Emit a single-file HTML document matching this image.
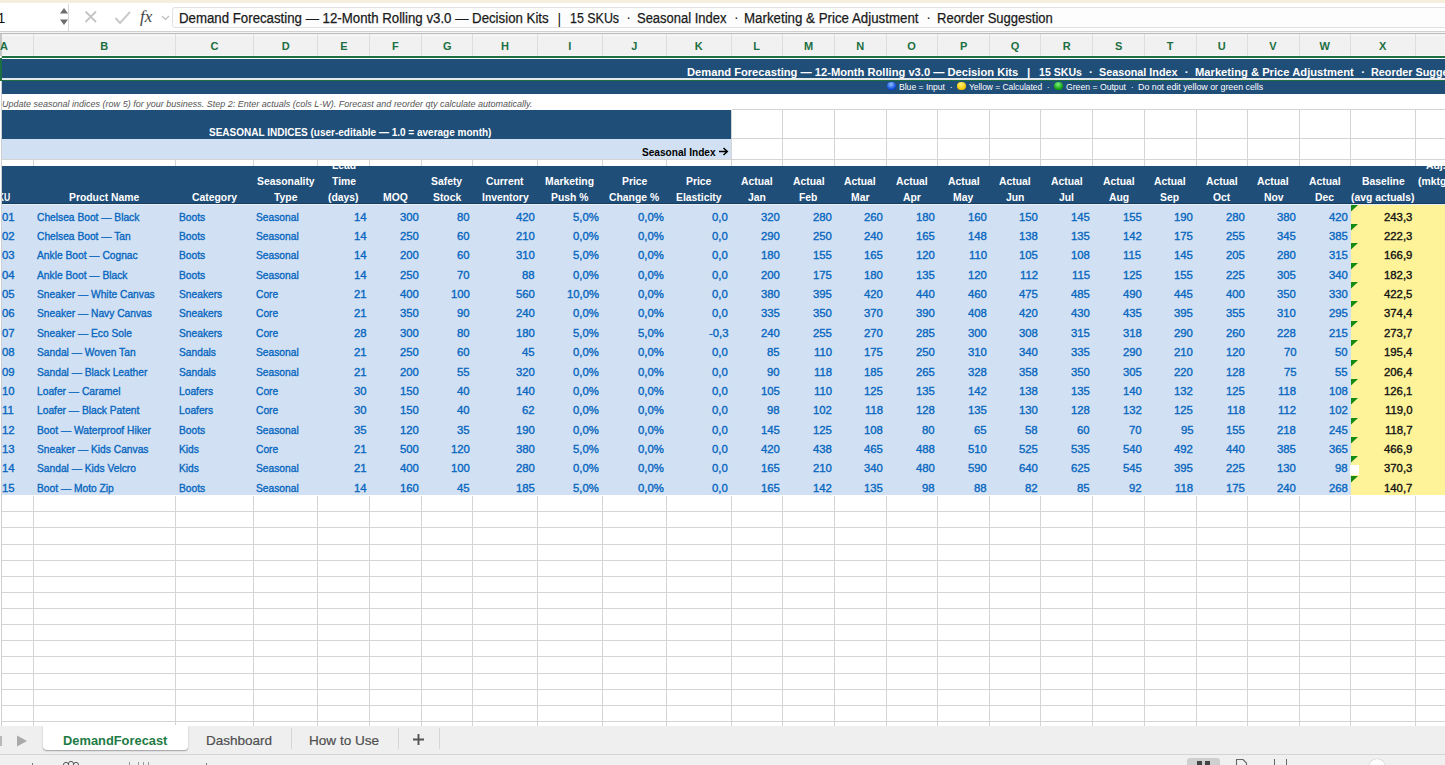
<!DOCTYPE html><html><head><meta charset="utf-8"><style>
html,body{margin:0;padding:0;}
body{width:1445px;height:765px;overflow:hidden;position:relative;background:#fff;font-family:"Liberation Sans",sans-serif;}
div{box-sizing:border-box;}
.t{position:absolute;white-space:nowrap;transform-origin:0 0;}
</style></head><body>
<div style="position:absolute;left:0.00px;top:0.00px;width:1445.00px;height:2.50px;background:#F6EEDC;"></div>
<div style="position:absolute;left:0.00px;top:2.50px;width:1445.00px;height:0.70px;background:#E4DCC8;"></div>
<div style="position:absolute;left:0.00px;top:3.20px;width:1445.00px;height:27.80px;background:#FFFFFF;"></div>
<div style="position:absolute;left:67.50px;top:3.50px;width:1.00px;height:27.00px;background:#D8D8D8;"></div>
<svg style="position:absolute;left:59px;top:6px" width="10" height="22"><path d="M1 7.5 L5 2 L9 7.5Z M1 13.5 L5 19 L9 13.5Z" fill="#6d6d6d"/></svg>
<svg style="position:absolute;left:84px;top:10px" width="14" height="14"><path d="M1.5 1.5 L12 12 M12 1.5 L1.5 12" stroke="#c4c4c4" stroke-width="1.8"/></svg>
<svg style="position:absolute;left:114px;top:10px" width="18" height="16"><path d="M1.5 8 L6 13 L16 2" stroke="#c9c9c9" stroke-width="1.9" fill="none"/></svg>
<svg style="position:absolute;left:161px;top:15px" width="9" height="6"><path d="M1 1 L4.5 4.5 L8 1" stroke="#bbb" stroke-width="1.1" fill="none"/></svg>
<div style="position:absolute;left:172.00px;top:7.20px;width:1288.00px;height:21.00px;background:#FDFDFD;border:1px solid #E2E2E2;border-radius:3px;"></div>
<div style="position:absolute;left:0.00px;top:30.80px;width:1445.00px;height:1.00px;background:#D0D0D0;"></div>
<div style="position:absolute;left:0.00px;top:31.80px;width:1445.00px;height:0.80px;background:#F4F4F4;"></div>
<div style="position:absolute;left:0.00px;top:32.60px;width:1445.00px;height:1.60px;background:#BDBDBD;"></div>
<div style="position:absolute;left:0.00px;top:34.20px;width:1445.00px;height:21.80px;background:#F1F1F1;"></div>
<div style="position:absolute;left:0.00px;top:35.00px;width:1445.00px;height:1.00px;background:#F8F8F8;"></div>
<div style="position:absolute;left:0.00px;top:54.60px;width:1445.00px;height:1.20px;background:#F8F8F8;"></div>
<div style="position:absolute;left:1.00px;top:34.20px;width:1.00px;height:21.80px;background:#DEDEDE;"></div>
<div style="position:absolute;left:32.60px;top:34.20px;width:1.00px;height:21.80px;background:#DEDEDE;"></div>
<div style="position:absolute;left:175.10px;top:34.20px;width:1.00px;height:21.80px;background:#DEDEDE;"></div>
<div style="position:absolute;left:252.90px;top:34.20px;width:1.00px;height:21.80px;background:#DEDEDE;"></div>
<div style="position:absolute;left:317.40px;top:34.20px;width:1.00px;height:21.80px;background:#DEDEDE;"></div>
<div style="position:absolute;left:368.90px;top:34.20px;width:1.00px;height:21.80px;background:#DEDEDE;"></div>
<div style="position:absolute;left:421.00px;top:34.20px;width:1.00px;height:21.80px;background:#DEDEDE;"></div>
<div style="position:absolute;left:472.10px;top:34.20px;width:1.00px;height:21.80px;background:#DEDEDE;"></div>
<div style="position:absolute;left:536.80px;top:34.20px;width:1.00px;height:21.80px;background:#DEDEDE;"></div>
<div style="position:absolute;left:601.60px;top:34.20px;width:1.00px;height:21.80px;background:#DEDEDE;"></div>
<div style="position:absolute;left:666.10px;top:34.20px;width:1.00px;height:21.80px;background:#DEDEDE;"></div>
<div style="position:absolute;left:730.60px;top:34.20px;width:1.00px;height:21.80px;background:#DEDEDE;"></div>
<div style="position:absolute;left:782.00px;top:34.20px;width:1.00px;height:21.80px;background:#DEDEDE;"></div>
<div style="position:absolute;left:834.00px;top:34.20px;width:1.00px;height:21.80px;background:#DEDEDE;"></div>
<div style="position:absolute;left:885.60px;top:34.20px;width:1.00px;height:21.80px;background:#DEDEDE;"></div>
<div style="position:absolute;left:936.90px;top:34.20px;width:1.00px;height:21.80px;background:#DEDEDE;"></div>
<div style="position:absolute;left:989.00px;top:34.20px;width:1.00px;height:21.80px;background:#DEDEDE;"></div>
<div style="position:absolute;left:1040.30px;top:34.20px;width:1.00px;height:21.80px;background:#DEDEDE;"></div>
<div style="position:absolute;left:1092.30px;top:34.20px;width:1.00px;height:21.80px;background:#DEDEDE;"></div>
<div style="position:absolute;left:1143.90px;top:34.20px;width:1.00px;height:21.80px;background:#DEDEDE;"></div>
<div style="position:absolute;left:1195.50px;top:34.20px;width:1.00px;height:21.80px;background:#DEDEDE;"></div>
<div style="position:absolute;left:1247.10px;top:34.20px;width:1.00px;height:21.80px;background:#DEDEDE;"></div>
<div style="position:absolute;left:1298.60px;top:34.20px;width:1.00px;height:21.80px;background:#DEDEDE;"></div>
<div style="position:absolute;left:1350.20px;top:34.20px;width:1.00px;height:21.80px;background:#DEDEDE;"></div>
<div style="position:absolute;left:1414.90px;top:34.20px;width:1.00px;height:21.80px;background:#DEDEDE;"></div>
<div style="position:absolute;left:0.00px;top:34.20px;width:1.60px;height:21.80px;background:#C8C8C8;"></div>
<div style="position:absolute;left:0.00px;top:56.00px;width:1445.00px;height:670.00px;background:#FFFFFF;"></div>
<div style="position:absolute;left:1.00px;top:56.00px;width:1.00px;height:670.00px;background:#D0D0D0;"></div>
<div style="position:absolute;left:2.00px;top:56.00px;width:1443.00px;height:1.70px;background:#1D6F42;"></div>
<div style="position:absolute;left:0.00px;top:57.70px;width:1.70px;height:23.30px;background:#1D6F42;"></div>
<div style="position:absolute;left:2.00px;top:59.20px;width:1443.00px;height:18.40px;background:#1F4E79;"></div>
<div style="position:absolute;left:2.00px;top:77.80px;width:1443.00px;height:1.90px;background:#E6E9EC;"></div>
<div style="position:absolute;left:2.00px;top:79.70px;width:1443.00px;height:1.70px;background:#1D6F42;"></div>
<div style="position:absolute;left:2.00px;top:81.40px;width:1443.00px;height:12.70px;background:#1F4E79;"></div>
<div style="position:absolute;left:2.00px;top:109.90px;width:729.60px;height:28.80px;background:#1F4E79;"></div>
<div style="position:absolute;left:2.00px;top:138.70px;width:729.60px;height:20.90px;background:#D1E1F3;"></div>
<div style="position:absolute;left:730.60px;top:109.90px;width:1.00px;height:56.00px;background:#D4D4D4;"></div>
<div style="position:absolute;left:782.00px;top:109.90px;width:1.00px;height:56.00px;background:#D4D4D4;"></div>
<div style="position:absolute;left:834.00px;top:109.90px;width:1.00px;height:56.00px;background:#D4D4D4;"></div>
<div style="position:absolute;left:885.60px;top:109.90px;width:1.00px;height:56.00px;background:#D4D4D4;"></div>
<div style="position:absolute;left:936.90px;top:109.90px;width:1.00px;height:56.00px;background:#D4D4D4;"></div>
<div style="position:absolute;left:989.00px;top:109.90px;width:1.00px;height:56.00px;background:#D4D4D4;"></div>
<div style="position:absolute;left:1040.30px;top:109.90px;width:1.00px;height:56.00px;background:#D4D4D4;"></div>
<div style="position:absolute;left:1092.30px;top:109.90px;width:1.00px;height:56.00px;background:#D4D4D4;"></div>
<div style="position:absolute;left:1143.90px;top:109.90px;width:1.00px;height:56.00px;background:#D4D4D4;"></div>
<div style="position:absolute;left:1195.50px;top:109.90px;width:1.00px;height:56.00px;background:#D4D4D4;"></div>
<div style="position:absolute;left:1247.10px;top:109.90px;width:1.00px;height:56.00px;background:#D4D4D4;"></div>
<div style="position:absolute;left:1298.60px;top:109.90px;width:1.00px;height:56.00px;background:#D4D4D4;"></div>
<div style="position:absolute;left:1350.20px;top:109.90px;width:1.00px;height:56.00px;background:#D4D4D4;"></div>
<div style="position:absolute;left:1414.90px;top:109.90px;width:1.00px;height:56.00px;background:#D4D4D4;"></div>
<div style="position:absolute;left:731.60px;top:109.40px;width:713.40px;height:1.00px;background:#D4D4D4;"></div>
<div style="position:absolute;left:731.60px;top:138.20px;width:713.40px;height:1.00px;background:#D4D4D4;"></div>
<div style="position:absolute;left:731.60px;top:159.10px;width:713.40px;height:1.00px;background:#D4D4D4;"></div>
<div style="position:absolute;left:32.60px;top:159.60px;width:1.00px;height:6.30px;background:#D4D4D4;"></div>
<div style="position:absolute;left:175.10px;top:159.60px;width:1.00px;height:6.30px;background:#D4D4D4;"></div>
<div style="position:absolute;left:252.90px;top:159.60px;width:1.00px;height:6.30px;background:#D4D4D4;"></div>
<div style="position:absolute;left:317.40px;top:159.60px;width:1.00px;height:6.30px;background:#D4D4D4;"></div>
<div style="position:absolute;left:368.90px;top:159.60px;width:1.00px;height:6.30px;background:#D4D4D4;"></div>
<div style="position:absolute;left:421.00px;top:159.60px;width:1.00px;height:6.30px;background:#D4D4D4;"></div>
<div style="position:absolute;left:472.10px;top:159.60px;width:1.00px;height:6.30px;background:#D4D4D4;"></div>
<div style="position:absolute;left:536.80px;top:159.60px;width:1.00px;height:6.30px;background:#D4D4D4;"></div>
<div style="position:absolute;left:601.60px;top:159.60px;width:1.00px;height:6.30px;background:#D4D4D4;"></div>
<div style="position:absolute;left:666.10px;top:159.60px;width:1.00px;height:6.30px;background:#D4D4D4;"></div>
<div style="position:absolute;left:730.60px;top:159.60px;width:1.00px;height:6.30px;background:#D4D4D4;"></div>
<div style="position:absolute;left:2.00px;top:159.40px;width:729.60px;height:0.80px;background:#D4D4D4;"></div>
<svg style="position:absolute;left:718px;top:147px" width="11" height="10"><path d="M1 4.5 H9 M5.5 1 L9.3 4.5 L5.5 8" stroke="#000" stroke-width="1.5" fill="none"/></svg>
<div style="position:absolute;left:886.80px;top:81.7px;width:9.2px;height:8.8px;border-radius:50%;background:radial-gradient(circle at 45% 30%,#8fc0ff,#0a45d8 70%);"></div>
<div style="position:absolute;left:956.60px;top:81.7px;width:9.2px;height:8.8px;border-radius:50%;background:radial-gradient(circle at 45% 30%,#fff27a,#f5c400 70%);"></div>
<div style="position:absolute;left:1053.90px;top:81.7px;width:9.2px;height:8.8px;border-radius:50%;background:radial-gradient(circle at 45% 30%,#7ef07e,#0a9a0a 70%);"></div>
<div style="position:absolute;left:2.00px;top:165.90px;width:1443.00px;height:37.90px;background:#1F4E79;"></div>
<div style="position:absolute;left:2.00px;top:203.00px;width:1443.00px;height:0.80px;background:#173d60;"></div>
<div class="t" style="left:-2.50px;top:9.50px;line-height:16px;font:normal normal 14px 'Liberation Sans';color:#111;transform:scaleX(1.0000);">1</div>
<div class="t" style="left:140.00px;top:7.00px;line-height:19px;font:italic normal 17px 'Liberation Serif';color:#444;transform:scaleX(1.0000);">fx</div>
<div class="t" style="left:179.45px;top:9.50px;line-height:16px;font:normal normal 14px 'Liberation Sans';color:#1a1a1a;transform:scaleX(0.9463);-webkit-text-stroke:0.25px currentColor;">Demand Forecasting — 12-Month Rolling v3.0 — Decision Kits</div>
<div class="t" style="left:570.21px;top:9.50px;line-height:16px;font:normal normal 14px 'Liberation Sans';color:#1a1a1a;transform:scaleX(0.8885);-webkit-text-stroke:0.25px currentColor;">15 SKUs</div>
<div class="t" style="left:637.40px;top:9.50px;line-height:16px;font:normal normal 14px 'Liberation Sans';color:#1a1a1a;transform:scaleX(0.9263);-webkit-text-stroke:0.25px currentColor;">Seasonal Index</div>
<div class="t" style="left:744.25px;top:9.50px;line-height:16px;font:normal normal 14px 'Liberation Sans';color:#1a1a1a;transform:scaleX(0.9503);-webkit-text-stroke:0.25px currentColor;">Marketing &amp; Price Adjustment</div>
<div class="t" style="left:936.67px;top:9.50px;line-height:16px;font:normal normal 14px 'Liberation Sans';color:#1a1a1a;transform:scaleX(0.9296);-webkit-text-stroke:0.25px currentColor;">Reorder Suggestion</div>
<div class="t" style="left:557.50px;top:10.50px;line-height:16px;font:normal normal 14px 'Liberation Sans';color:#1a1a1a;transform:scaleX(1.0000);">|</div>
<div class="t" style="left:626.20px;top:8.50px;line-height:16px;font:normal normal 14px 'Liberation Sans';color:#1a1a1a;transform:scaleX(1.0000);">·</div>
<div class="t" style="left:733.90px;top:8.50px;line-height:16px;font:normal normal 14px 'Liberation Sans';color:#1a1a1a;transform:scaleX(1.0000);">·</div>
<div class="t" style="left:926.30px;top:8.50px;line-height:16px;font:normal normal 14px 'Liberation Sans';color:#1a1a1a;transform:scaleX(1.0000);">·</div>
<div class="t" style="left:0.00px;top:39.70px;line-height:12px;font:normal bold 11px 'Liberation Sans';color:#1D6F42;transform:scaleX(1.0000);">A</div>
<div class="t" style="left:100.35px;top:39.70px;line-height:12px;font:normal bold 11px 'Liberation Sans';color:#1D6F42;transform:scaleX(1.0000);">B</div>
<div class="t" style="left:210.50px;top:39.70px;line-height:12px;font:normal bold 11px 'Liberation Sans';color:#1D6F42;transform:scaleX(1.0000);">C</div>
<div class="t" style="left:281.65px;top:39.70px;line-height:12px;font:normal bold 11px 'Liberation Sans';color:#1D6F42;transform:scaleX(1.0000);">D</div>
<div class="t" style="left:340.15px;top:39.70px;line-height:12px;font:normal bold 11px 'Liberation Sans';color:#1D6F42;transform:scaleX(1.0000);">E</div>
<div class="t" style="left:391.95px;top:39.70px;line-height:12px;font:normal bold 11px 'Liberation Sans';color:#1D6F42;transform:scaleX(1.0000);">F</div>
<div class="t" style="left:443.05px;top:39.70px;line-height:12px;font:normal bold 11px 'Liberation Sans';color:#1D6F42;transform:scaleX(1.0000);">G</div>
<div class="t" style="left:500.95px;top:39.70px;line-height:12px;font:normal bold 11px 'Liberation Sans';color:#1D6F42;transform:scaleX(1.0000);">H</div>
<div class="t" style="left:568.20px;top:39.70px;line-height:12px;font:normal bold 11px 'Liberation Sans';color:#1D6F42;transform:scaleX(1.0000);">I</div>
<div class="t" style="left:631.35px;top:39.70px;line-height:12px;font:normal bold 11px 'Liberation Sans';color:#1D6F42;transform:scaleX(1.0000);">J</div>
<div class="t" style="left:694.85px;top:39.70px;line-height:12px;font:normal bold 11px 'Liberation Sans';color:#1D6F42;transform:scaleX(1.0000);">K</div>
<div class="t" style="left:753.30px;top:39.70px;line-height:12px;font:normal bold 11px 'Liberation Sans';color:#1D6F42;transform:scaleX(1.0000);">L</div>
<div class="t" style="left:804.00px;top:39.70px;line-height:12px;font:normal bold 11px 'Liberation Sans';color:#1D6F42;transform:scaleX(1.0000);">M</div>
<div class="t" style="left:856.30px;top:39.70px;line-height:12px;font:normal bold 11px 'Liberation Sans';color:#1D6F42;transform:scaleX(1.0000);">N</div>
<div class="t" style="left:907.25px;top:39.70px;line-height:12px;font:normal bold 11px 'Liberation Sans';color:#1D6F42;transform:scaleX(1.0000);">O</div>
<div class="t" style="left:959.95px;top:39.70px;line-height:12px;font:normal bold 11px 'Liberation Sans';color:#1D6F42;transform:scaleX(1.0000);">P</div>
<div class="t" style="left:1010.65px;top:39.70px;line-height:12px;font:normal bold 11px 'Liberation Sans';color:#1D6F42;transform:scaleX(1.0000);">Q</div>
<div class="t" style="left:1062.80px;top:39.70px;line-height:12px;font:normal bold 11px 'Liberation Sans';color:#1D6F42;transform:scaleX(1.0000);">R</div>
<div class="t" style="left:1115.10px;top:39.70px;line-height:12px;font:normal bold 11px 'Liberation Sans';color:#1D6F42;transform:scaleX(1.0000);">S</div>
<div class="t" style="left:1166.70px;top:39.70px;line-height:12px;font:normal bold 11px 'Liberation Sans';color:#1D6F42;transform:scaleX(1.0000);">T</div>
<div class="t" style="left:1217.80px;top:39.70px;line-height:12px;font:normal bold 11px 'Liberation Sans';color:#1D6F42;transform:scaleX(1.0000);">U</div>
<div class="t" style="left:1269.35px;top:39.70px;line-height:12px;font:normal bold 11px 'Liberation Sans';color:#1D6F42;transform:scaleX(1.0000);">V</div>
<div class="t" style="left:1319.40px;top:39.70px;line-height:12px;font:normal bold 11px 'Liberation Sans';color:#1D6F42;transform:scaleX(1.0000);">W</div>
<div class="t" style="left:1379.05px;top:39.70px;line-height:12px;font:normal bold 11px 'Liberation Sans';color:#1D6F42;transform:scaleX(1.0000);">X</div>
<div class="t" style="left:1453.70px;top:39.70px;line-height:12px;font:normal bold 11px 'Liberation Sans';color:#1D6F42;transform:scaleX(1.0000);">Y</div>
<div class="t" style="left:2.10px;top:98.60px;line-height:10px;font:italic normal 8.7px 'Liberation Sans';color:#555;transform:scaleX(1.0365);">Update seasonal indices (row 5) for your business. Step 2: Enter actuals (cols L-W). Forecast and reorder qty calculate automatically.</div>
<div class="t" style="left:208.70px;top:125.80px;line-height:12px;font:normal bold 10.8px 'Liberation Sans';color:#fff;transform:scaleX(0.9264);">SEASONAL INDICES (user-editable — 1.0 = average month)</div>
<div class="t" style="left:642.40px;top:145.70px;line-height:12px;font:normal bold 10.8px 'Liberation Sans';color:#000;transform:scaleX(0.9363);">Seasonal Index</div>
<div class="t" style="left:686.60px;top:65.30px;line-height:13px;font:normal bold 11.7px 'Liberation Sans';color:#fff;transform:scaleX(0.9551);">Demand Forecasting — 12-Month Rolling v3.0 — Decision Kits</div>
<div class="t" style="left:1038.70px;top:65.30px;line-height:13px;font:normal bold 11.7px 'Liberation Sans';color:#fff;transform:scaleX(0.9056);">15 SKUs</div>
<div class="t" style="left:1098.50px;top:65.30px;line-height:13px;font:normal bold 11.7px 'Liberation Sans';color:#fff;transform:scaleX(0.9218);">Seasonal Index</div>
<div class="t" style="left:1195.00px;top:65.30px;line-height:13px;font:normal bold 11.7px 'Liberation Sans';color:#fff;transform:scaleX(0.9575);">Marketing &amp; Price Adjustment</div>
<div class="t" style="left:1371.20px;top:65.30px;line-height:13px;font:normal bold 11.7px 'Liberation Sans';color:#fff;transform:scaleX(0.9250);">Reorder Suggestion</div>
<div class="t" style="left:1026.90px;top:65.30px;line-height:13px;font:normal bold 11.7px 'Liberation Sans';color:#fff;transform:scaleX(1.0000);">|</div>
<div class="t" style="left:1089.10px;top:65.30px;line-height:13px;font:normal bold 11.7px 'Liberation Sans';color:#fff;transform:scaleX(1.0000);">·</div>
<div class="t" style="left:1184.70px;top:65.30px;line-height:13px;font:normal bold 11.7px 'Liberation Sans';color:#fff;transform:scaleX(1.0000);">·</div>
<div class="t" style="left:1361.20px;top:65.30px;line-height:13px;font:normal bold 11.7px 'Liberation Sans';color:#fff;transform:scaleX(1.0000);">·</div>
<div class="t" style="left:898.70px;top:82.30px;line-height:10px;font:normal normal 8.6px 'Liberation Sans';color:#fff;transform:scaleX(0.9974);">Blue = Input</div>
<div class="t" style="left:968.60px;top:82.30px;line-height:10px;font:normal normal 8.6px 'Liberation Sans';color:#fff;transform:scaleX(0.9754);">Yellow = Calculated</div>
<div class="t" style="left:1065.50px;top:82.30px;line-height:10px;font:normal normal 8.6px 'Liberation Sans';color:#fff;transform:scaleX(1.0068);">Green = Output</div>
<div class="t" style="left:1137.50px;top:82.30px;line-height:10px;font:normal normal 8.6px 'Liberation Sans';color:#fff;transform:scaleX(1.0279);">Do not edit yellow or green cells</div>
<div class="t" style="left:949.80px;top:81.80px;line-height:10px;font:normal normal 8.6px 'Liberation Sans';color:#fff;transform:scaleX(1.0000);">·</div>
<div class="t" style="left:1046.70px;top:81.80px;line-height:10px;font:normal normal 8.6px 'Liberation Sans';color:#fff;transform:scaleX(1.0000);">·</div>
<div class="t" style="left:1130.80px;top:81.80px;line-height:10px;font:normal normal 8.6px 'Liberation Sans';color:#fff;transform:scaleX(1.0000);">·</div>
<div style="position:absolute;left:0px;top:165.9px;width:1445px;height:37.900000000000006px;overflow:hidden;">
<div class="t" style="left:-8.18px;top:25.20px;line-height:12px;font:normal bold 10.7px 'Liberation Sans';color:#fff;transform:scaleX(0.8000);">SKU</div>
<div class="t" style="left:69.18px;top:25.20px;line-height:12px;font:normal bold 10.7px 'Liberation Sans';color:#fff;transform:scaleX(0.9700);">Product Name</div>
<div class="t" style="left:192.01px;top:25.20px;line-height:12px;font:normal bold 10.7px 'Liberation Sans';color:#fff;transform:scaleX(0.9700);">Category</div>
<div class="t" style="left:256.81px;top:9.20px;line-height:12px;font:normal bold 10.7px 'Liberation Sans';color:#fff;transform:scaleX(0.9700);">Seasonality</div>
<div class="t" style="left:273.91px;top:25.20px;line-height:12px;font:normal bold 10.7px 'Liberation Sans';color:#fff;transform:scaleX(0.9700);">Type</div>
<div class="t" style="left:331.81px;top:-6.80px;line-height:12px;font:normal bold 10.7px 'Liberation Sans';color:#fff;transform:scaleX(0.9700);">Lead</div>
<div class="t" style="left:331.62px;top:9.20px;line-height:12px;font:normal bold 10.7px 'Liberation Sans';color:#fff;transform:scaleX(0.9700);">Time</div>
<div class="t" style="left:328.17px;top:25.20px;line-height:12px;font:normal bold 10.7px 'Liberation Sans';color:#fff;transform:scaleX(0.9700);">(days)</div>
<div class="t" style="left:383.22px;top:25.20px;line-height:12px;font:normal bold 10.7px 'Liberation Sans';color:#fff;transform:scaleX(0.9700);">MOQ</div>
<div class="t" style="left:431.46px;top:9.20px;line-height:12px;font:normal bold 10.7px 'Liberation Sans';color:#fff;transform:scaleX(0.9700);">Safety</div>
<div class="t" style="left:432.91px;top:25.20px;line-height:12px;font:normal bold 10.7px 'Liberation Sans';color:#fff;transform:scaleX(0.9700);">Stock</div>
<div class="t" style="left:486.02px;top:9.20px;line-height:12px;font:normal bold 10.7px 'Liberation Sans';color:#fff;transform:scaleX(0.9700);">Current</div>
<div class="t" style="left:481.59px;top:25.20px;line-height:12px;font:normal bold 10.7px 'Liberation Sans';color:#fff;transform:scaleX(0.9700);">Inventory</div>
<div class="t" style="left:545.47px;top:9.20px;line-height:12px;font:normal bold 10.7px 'Liberation Sans';color:#fff;transform:scaleX(0.9700);">Marketing</div>
<div class="t" style="left:550.74px;top:25.20px;line-height:12px;font:normal bold 10.7px 'Liberation Sans';color:#fff;transform:scaleX(0.9700);">Push %</div>
<div class="t" style="left:621.64px;top:9.20px;line-height:12px;font:normal bold 10.7px 'Liberation Sans';color:#fff;transform:scaleX(0.9700);">Price</div>
<div class="t" style="left:609.05px;top:25.20px;line-height:12px;font:normal bold 10.7px 'Liberation Sans';color:#fff;transform:scaleX(0.9700);">Change %</div>
<div class="t" style="left:686.14px;top:9.20px;line-height:12px;font:normal bold 10.7px 'Liberation Sans';color:#fff;transform:scaleX(0.9700);">Price</div>
<div class="t" style="left:676.06px;top:25.20px;line-height:12px;font:normal bold 10.7px 'Liberation Sans';color:#fff;transform:scaleX(0.9700);">Elasticity</div>
<div class="t" style="left:740.94px;top:9.20px;line-height:12px;font:normal bold 10.7px 'Liberation Sans';color:#fff;transform:scaleX(0.9700);">Actual</div>
<div class="t" style="left:748.12px;top:25.20px;line-height:12px;font:normal bold 10.7px 'Liberation Sans';color:#fff;transform:scaleX(0.9700);">Jan</div>
<div class="t" style="left:792.64px;top:9.20px;line-height:12px;font:normal bold 10.7px 'Liberation Sans';color:#fff;transform:scaleX(0.9700);">Actual</div>
<div class="t" style="left:799.06px;top:25.20px;line-height:12px;font:normal bold 10.7px 'Liberation Sans';color:#fff;transform:scaleX(0.9700);">Feb</div>
<div class="t" style="left:844.44px;top:9.20px;line-height:12px;font:normal bold 10.7px 'Liberation Sans';color:#fff;transform:scaleX(0.9700);">Actual</div>
<div class="t" style="left:851.16px;top:25.20px;line-height:12px;font:normal bold 10.7px 'Liberation Sans';color:#fff;transform:scaleX(0.9700);">Mar</div>
<div class="t" style="left:895.89px;top:9.20px;line-height:12px;font:normal bold 10.7px 'Liberation Sans';color:#fff;transform:scaleX(0.9700);">Actual</div>
<div class="t" style="left:902.90px;top:25.20px;line-height:12px;font:normal bold 10.7px 'Liberation Sans';color:#fff;transform:scaleX(0.9700);">Apr</div>
<div class="t" style="left:947.59px;top:9.20px;line-height:12px;font:normal bold 10.7px 'Liberation Sans';color:#fff;transform:scaleX(0.9700);">Actual</div>
<div class="t" style="left:953.34px;top:25.20px;line-height:12px;font:normal bold 10.7px 'Liberation Sans';color:#fff;transform:scaleX(0.9700);">May</div>
<div class="t" style="left:999.29px;top:9.20px;line-height:12px;font:normal bold 10.7px 'Liberation Sans';color:#fff;transform:scaleX(0.9700);">Actual</div>
<div class="t" style="left:1006.19px;top:25.20px;line-height:12px;font:normal bold 10.7px 'Liberation Sans';color:#fff;transform:scaleX(0.9700);">Jun</div>
<div class="t" style="left:1050.94px;top:9.20px;line-height:12px;font:normal bold 10.7px 'Liberation Sans';color:#fff;transform:scaleX(0.9700);">Actual</div>
<div class="t" style="left:1059.30px;top:25.20px;line-height:12px;font:normal bold 10.7px 'Liberation Sans';color:#fff;transform:scaleX(0.9700);">Jul</div>
<div class="t" style="left:1102.74px;top:9.20px;line-height:12px;font:normal bold 10.7px 'Liberation Sans';color:#fff;transform:scaleX(0.9700);">Actual</div>
<div class="t" style="left:1108.78px;top:25.20px;line-height:12px;font:normal bold 10.7px 'Liberation Sans';color:#fff;transform:scaleX(0.9700);">Aug</div>
<div class="t" style="left:1154.34px;top:9.20px;line-height:12px;font:normal bold 10.7px 'Liberation Sans';color:#fff;transform:scaleX(0.9700);">Actual</div>
<div class="t" style="left:1160.46px;top:25.20px;line-height:12px;font:normal bold 10.7px 'Liberation Sans';color:#fff;transform:scaleX(0.9700);">Sep</div>
<div class="t" style="left:1205.94px;top:9.20px;line-height:12px;font:normal bold 10.7px 'Liberation Sans';color:#fff;transform:scaleX(0.9700);">Actual</div>
<div class="t" style="left:1212.95px;top:25.20px;line-height:12px;font:normal bold 10.7px 'Liberation Sans';color:#fff;transform:scaleX(0.9700);">Oct</div>
<div class="t" style="left:1257.49px;top:9.20px;line-height:12px;font:normal bold 10.7px 'Liberation Sans';color:#fff;transform:scaleX(0.9700);">Actual</div>
<div class="t" style="left:1263.53px;top:25.20px;line-height:12px;font:normal bold 10.7px 'Liberation Sans';color:#fff;transform:scaleX(0.9700);">Nov</div>
<div class="t" style="left:1309.04px;top:9.20px;line-height:12px;font:normal bold 10.7px 'Liberation Sans';color:#fff;transform:scaleX(0.9700);">Actual</div>
<div class="t" style="left:1315.36px;top:25.20px;line-height:12px;font:normal bold 10.7px 'Liberation Sans';color:#fff;transform:scaleX(0.9700);">Dec</div>
<div class="t" style="left:1361.70px;top:9.20px;line-height:12px;font:normal bold 10.7px 'Liberation Sans';color:#fff;transform:scaleX(0.9700);">Baseline</div>
<div class="t" style="left:1351.15px;top:25.20px;line-height:12px;font:normal bold 10.7px 'Liberation Sans';color:#fff;transform:scaleX(0.9700);">(avg actuals)</div>
<div class="t" style="left:1425.50px;top:-6.80px;line-height:12px;font:normal bold 10.7px 'Liberation Sans';color:#fff;transform:scaleX(0.9700);">Adj.</div>
<div class="t" style="left:1418.00px;top:9.20px;line-height:12px;font:normal bold 10.7px 'Liberation Sans';color:#fff;transform:scaleX(0.9700);">(mktg + price)</div>
</div>
<div style="position:absolute;left:2.00px;top:203.80px;width:1348.70px;height:291.70px;background:#D1E1F3;"></div>
<div style="position:absolute;left:1350.70px;top:203.80px;width:94.30px;height:291.70px;background:#FFF399;"></div>
<div style="position:absolute;left:2.00px;top:203.80px;width:1443.00px;height:1.20px;background:#E8EEF5;"></div>
<svg style="position:absolute;left:1351.20px;top:204.60px" width="8" height="7"><path d="M0 0 L7 0 L0 6.5Z" fill="#138a13"/></svg>
<svg style="position:absolute;left:1351.20px;top:223.97px" width="8" height="7"><path d="M0 0 L7 0 L0 6.5Z" fill="#138a13"/></svg>
<svg style="position:absolute;left:1351.20px;top:243.34px" width="8" height="7"><path d="M0 0 L7 0 L0 6.5Z" fill="#138a13"/></svg>
<svg style="position:absolute;left:1351.20px;top:262.71px" width="8" height="7"><path d="M0 0 L7 0 L0 6.5Z" fill="#138a13"/></svg>
<svg style="position:absolute;left:1351.20px;top:282.08px" width="8" height="7"><path d="M0 0 L7 0 L0 6.5Z" fill="#138a13"/></svg>
<svg style="position:absolute;left:1351.20px;top:301.45px" width="8" height="7"><path d="M0 0 L7 0 L0 6.5Z" fill="#138a13"/></svg>
<svg style="position:absolute;left:1351.20px;top:320.82px" width="8" height="7"><path d="M0 0 L7 0 L0 6.5Z" fill="#138a13"/></svg>
<svg style="position:absolute;left:1351.20px;top:340.19px" width="8" height="7"><path d="M0 0 L7 0 L0 6.5Z" fill="#138a13"/></svg>
<svg style="position:absolute;left:1351.20px;top:359.56px" width="8" height="7"><path d="M0 0 L7 0 L0 6.5Z" fill="#138a13"/></svg>
<svg style="position:absolute;left:1351.20px;top:378.93px" width="8" height="7"><path d="M0 0 L7 0 L0 6.5Z" fill="#138a13"/></svg>
<svg style="position:absolute;left:1351.20px;top:398.30px" width="8" height="7"><path d="M0 0 L7 0 L0 6.5Z" fill="#138a13"/></svg>
<svg style="position:absolute;left:1351.20px;top:417.67px" width="8" height="7"><path d="M0 0 L7 0 L0 6.5Z" fill="#138a13"/></svg>
<svg style="position:absolute;left:1351.20px;top:437.04px" width="8" height="7"><path d="M0 0 L7 0 L0 6.5Z" fill="#138a13"/></svg>
<svg style="position:absolute;left:1351.20px;top:456.41px" width="8" height="7"><path d="M0 0 L7 0 L0 6.5Z" fill="#138a13"/></svg>
<svg style="position:absolute;left:1351.20px;top:475.78px" width="8" height="7"><path d="M0 0 L7 0 L0 6.5Z" fill="#138a13"/></svg>
<div style="position:absolute;left:1350.30px;top:465.00px;width:8.60px;height:10.00px;background:#fff;"></div>
<div style="position:absolute;left:2.00px;top:510.80px;width:1443.00px;height:1.00px;background:#D4D4D4;"></div>
<div style="position:absolute;left:2.00px;top:527.10px;width:1443.00px;height:1.00px;background:#D4D4D4;"></div>
<div style="position:absolute;left:2.00px;top:543.50px;width:1443.00px;height:1.00px;background:#D4D4D4;"></div>
<div style="position:absolute;left:2.00px;top:559.50px;width:1443.00px;height:1.00px;background:#D4D4D4;"></div>
<div style="position:absolute;left:2.00px;top:575.80px;width:1443.00px;height:1.00px;background:#D4D4D4;"></div>
<div style="position:absolute;left:2.00px;top:591.80px;width:1443.00px;height:1.00px;background:#D4D4D4;"></div>
<div style="position:absolute;left:2.00px;top:608.10px;width:1443.00px;height:1.00px;background:#D4D4D4;"></div>
<div style="position:absolute;left:2.00px;top:624.10px;width:1443.00px;height:1.00px;background:#D4D4D4;"></div>
<div style="position:absolute;left:2.00px;top:640.40px;width:1443.00px;height:1.00px;background:#D4D4D4;"></div>
<div style="position:absolute;left:2.00px;top:656.40px;width:1443.00px;height:1.00px;background:#D4D4D4;"></div>
<div style="position:absolute;left:2.00px;top:672.70px;width:1443.00px;height:1.00px;background:#D4D4D4;"></div>
<div style="position:absolute;left:2.00px;top:688.70px;width:1443.00px;height:1.00px;background:#D4D4D4;"></div>
<div style="position:absolute;left:2.00px;top:705.00px;width:1443.00px;height:1.00px;background:#D4D4D4;"></div>
<div style="position:absolute;left:2.00px;top:721.00px;width:1443.00px;height:1.00px;background:#D4D4D4;"></div>
<div style="position:absolute;left:32.60px;top:495.50px;width:1.00px;height:230.50px;background:#D4D4D4;"></div>
<div style="position:absolute;left:175.10px;top:495.50px;width:1.00px;height:230.50px;background:#D4D4D4;"></div>
<div style="position:absolute;left:252.90px;top:495.50px;width:1.00px;height:230.50px;background:#D4D4D4;"></div>
<div style="position:absolute;left:317.40px;top:495.50px;width:1.00px;height:230.50px;background:#D4D4D4;"></div>
<div style="position:absolute;left:368.90px;top:495.50px;width:1.00px;height:230.50px;background:#D4D4D4;"></div>
<div style="position:absolute;left:421.00px;top:495.50px;width:1.00px;height:230.50px;background:#D4D4D4;"></div>
<div style="position:absolute;left:472.10px;top:495.50px;width:1.00px;height:230.50px;background:#D4D4D4;"></div>
<div style="position:absolute;left:536.80px;top:495.50px;width:1.00px;height:230.50px;background:#D4D4D4;"></div>
<div style="position:absolute;left:601.60px;top:495.50px;width:1.00px;height:230.50px;background:#D4D4D4;"></div>
<div style="position:absolute;left:666.10px;top:495.50px;width:1.00px;height:230.50px;background:#D4D4D4;"></div>
<div style="position:absolute;left:730.60px;top:495.50px;width:1.00px;height:230.50px;background:#D4D4D4;"></div>
<div style="position:absolute;left:782.00px;top:495.50px;width:1.00px;height:230.50px;background:#D4D4D4;"></div>
<div style="position:absolute;left:834.00px;top:495.50px;width:1.00px;height:230.50px;background:#D4D4D4;"></div>
<div style="position:absolute;left:885.60px;top:495.50px;width:1.00px;height:230.50px;background:#D4D4D4;"></div>
<div style="position:absolute;left:936.90px;top:495.50px;width:1.00px;height:230.50px;background:#D4D4D4;"></div>
<div style="position:absolute;left:989.00px;top:495.50px;width:1.00px;height:230.50px;background:#D4D4D4;"></div>
<div style="position:absolute;left:1040.30px;top:495.50px;width:1.00px;height:230.50px;background:#D4D4D4;"></div>
<div style="position:absolute;left:1092.30px;top:495.50px;width:1.00px;height:230.50px;background:#D4D4D4;"></div>
<div style="position:absolute;left:1143.90px;top:495.50px;width:1.00px;height:230.50px;background:#D4D4D4;"></div>
<div style="position:absolute;left:1195.50px;top:495.50px;width:1.00px;height:230.50px;background:#D4D4D4;"></div>
<div style="position:absolute;left:1247.10px;top:495.50px;width:1.00px;height:230.50px;background:#D4D4D4;"></div>
<div style="position:absolute;left:1298.60px;top:495.50px;width:1.00px;height:230.50px;background:#D4D4D4;"></div>
<div style="position:absolute;left:1350.20px;top:495.50px;width:1.00px;height:230.50px;background:#D4D4D4;"></div>
<div style="position:absolute;left:1414.90px;top:495.50px;width:1.00px;height:230.50px;background:#D4D4D4;"></div>
<div style="position:absolute;left:0.00px;top:726.00px;width:1445.00px;height:28.00px;background:#EFEFEF;"></div>
<div style="position:absolute;left:0.00px;top:753.80px;width:1445.00px;height:1.00px;background:#D4D4D4;"></div>
<div style="position:absolute;left:0.00px;top:754.80px;width:1445.00px;height:10.20px;background:#F0F0F0;"></div>
<svg style="position:absolute;left:0px;top:734px" width="40" height="14"><path d="M0 2 L2 2 L2 12 L0 12Z" fill="#b8b8b8"/><path d="M17 1.5 L27 7 L17 12.5Z" fill="#a9a9a9"/></svg>
<div style="position:absolute;left:42.80px;top:725.00px;width:145.40px;height:25.00px;background:#FFFFFF;border-radius:0 0 4px 4px;box-shadow:0 1px 1.5px rgba(0,0,0,0.35);"></div>
<div style="position:absolute;left:291.00px;top:728.00px;width:1.00px;height:21.00px;background:#D6D6D6;"></div>
<div style="position:absolute;left:397.60px;top:728.00px;width:1.00px;height:21.00px;background:#D6D6D6;"></div>
<div style="position:absolute;left:438.50px;top:728.00px;width:1.00px;height:21.00px;background:#D6D6D6;"></div>
<svg style="position:absolute;left:412px;top:733px" width="13" height="13"><path d="M6.5 1 V12 M1 6.5 H12" stroke="#555" stroke-width="1.9"/></svg>
<div style="position:absolute;left:1187.00px;top:757.50px;width:33.00px;height:12.50px;background:#CFCFCF;border-radius:3px;"></div>
<svg style="position:absolute;left:1196px;top:759px" width="16" height="8"><path d="M1 2 h5 v6 h-5z M9 2 h5 v6 h-5z" fill="#444"/></svg>
<svg style="position:absolute;left:1235px;top:758px" width="14" height="8"><path d="M1.5 8 V1.5 H8 L11.5 5 V8" stroke="#666" stroke-width="1.1" fill="none"/></svg>
<div style="position:absolute;left:1274.00px;top:759.00px;width:1.00px;height:6.00px;background:#666;"></div>
<div style="position:absolute;left:1286.00px;top:759.00px;width:1.00px;height:6.00px;background:#666;"></div>
<div style="position:absolute;left:1369px;top:759px;width:16px;height:16px;border-radius:50%;background:#fff;box-shadow:0 0 1px rgba(0,0,0,0.4);"></div>
<svg style="position:absolute;left:62px;top:760.5px" width="18" height="8"><circle cx="4" cy="4" r="2.6" stroke="#555" fill="none" stroke-width="1"/><circle cx="9" cy="3" r="2.6" stroke="#555" fill="none" stroke-width="1"/><circle cx="14" cy="4" r="2.6" stroke="#555" fill="none" stroke-width="1"/></svg>
<div style="position:absolute;left:32.00px;top:763.00px;width:1.00px;height:2.00px;background:#777;"></div>
<div style="position:absolute;left:129.00px;top:762.00px;width:1.00px;height:3.00px;background:#999;"></div>
<div style="position:absolute;left:138.00px;top:762.00px;width:1.00px;height:3.00px;background:#999;"></div>
<div style="position:absolute;left:143.00px;top:762.00px;width:1.00px;height:3.00px;background:#999;"></div>
<div style="position:absolute;left:148.00px;top:762.00px;width:1.00px;height:3.00px;background:#999;"></div>
<div style="position:absolute;left:206.00px;top:763.00px;width:1.00px;height:2.00px;background:#777;"></div>
<div class="t" style="left:2.30px;top:210.60px;line-height:12px;font:normal normal 11px 'Liberation Sans';color:#0866BF;transform:scaleX(1.0300);-webkit-text-stroke:0.35px currentColor;">01</div>
<div class="t" style="left:36.80px;top:210.60px;line-height:12px;font:normal normal 11px 'Liberation Sans';color:#0866BF;transform:scaleX(0.9300);-webkit-text-stroke:0.35px currentColor;">Chelsea Boot — Black</div>
<div class="t" style="left:178.90px;top:210.60px;line-height:12px;font:normal normal 11px 'Liberation Sans';color:#0866BF;transform:scaleX(0.9300);-webkit-text-stroke:0.35px currentColor;">Boots</div>
<div class="t" style="left:256.20px;top:210.60px;line-height:12px;font:normal normal 11px 'Liberation Sans';color:#0866BF;transform:scaleX(0.9300);-webkit-text-stroke:0.35px currentColor;">Seasonal</div>
<div class="t" style="left:353.92px;top:210.60px;line-height:12px;font:normal normal 11px 'Liberation Sans';color:#0866BF;transform:scaleX(1.0300);-webkit-text-stroke:0.35px currentColor;">14</div>
<div class="t" style="left:399.72px;top:210.60px;line-height:12px;font:normal normal 11px 'Liberation Sans';color:#0866BF;transform:scaleX(1.0300);-webkit-text-stroke:0.35px currentColor;">300</div>
<div class="t" style="left:457.12px;top:210.60px;line-height:12px;font:normal normal 11px 'Liberation Sans';color:#0866BF;transform:scaleX(1.0300);-webkit-text-stroke:0.35px currentColor;">80</div>
<div class="t" style="left:515.52px;top:210.60px;line-height:12px;font:normal normal 11px 'Liberation Sans';color:#0866BF;transform:scaleX(1.0300);-webkit-text-stroke:0.35px currentColor;">420</div>
<div class="t" style="left:573.05px;top:210.60px;line-height:12px;font:normal normal 11px 'Liberation Sans';color:#0866BF;transform:scaleX(1.0300);-webkit-text-stroke:0.35px currentColor;">5,0%</div>
<div class="t" style="left:637.55px;top:210.60px;line-height:12px;font:normal normal 11px 'Liberation Sans';color:#0866BF;transform:scaleX(1.0300);-webkit-text-stroke:0.35px currentColor;">0,0%</div>
<div class="t" style="left:712.47px;top:210.60px;line-height:12px;font:normal normal 11px 'Liberation Sans';color:#0866BF;transform:scaleX(1.0300);-webkit-text-stroke:0.35px currentColor;">0,0</div>
<div class="t" style="left:760.72px;top:210.60px;line-height:12px;font:normal normal 11px 'Liberation Sans';color:#0866BF;transform:scaleX(1.0300);-webkit-text-stroke:0.35px currentColor;">320</div>
<div class="t" style="left:812.72px;top:210.60px;line-height:12px;font:normal normal 11px 'Liberation Sans';color:#0866BF;transform:scaleX(1.0300);-webkit-text-stroke:0.35px currentColor;">280</div>
<div class="t" style="left:864.32px;top:210.60px;line-height:12px;font:normal normal 11px 'Liberation Sans';color:#0866BF;transform:scaleX(1.0300);-webkit-text-stroke:0.35px currentColor;">260</div>
<div class="t" style="left:915.62px;top:210.60px;line-height:12px;font:normal normal 11px 'Liberation Sans';color:#0866BF;transform:scaleX(1.0300);-webkit-text-stroke:0.35px currentColor;">180</div>
<div class="t" style="left:967.72px;top:210.60px;line-height:12px;font:normal normal 11px 'Liberation Sans';color:#0866BF;transform:scaleX(1.0300);-webkit-text-stroke:0.35px currentColor;">160</div>
<div class="t" style="left:1019.02px;top:210.60px;line-height:12px;font:normal normal 11px 'Liberation Sans';color:#0866BF;transform:scaleX(1.0300);-webkit-text-stroke:0.35px currentColor;">150</div>
<div class="t" style="left:1071.02px;top:210.60px;line-height:12px;font:normal normal 11px 'Liberation Sans';color:#0866BF;transform:scaleX(1.0300);-webkit-text-stroke:0.35px currentColor;">145</div>
<div class="t" style="left:1122.62px;top:210.60px;line-height:12px;font:normal normal 11px 'Liberation Sans';color:#0866BF;transform:scaleX(1.0300);-webkit-text-stroke:0.35px currentColor;">155</div>
<div class="t" style="left:1174.22px;top:210.60px;line-height:12px;font:normal normal 11px 'Liberation Sans';color:#0866BF;transform:scaleX(1.0300);-webkit-text-stroke:0.35px currentColor;">190</div>
<div class="t" style="left:1225.82px;top:210.60px;line-height:12px;font:normal normal 11px 'Liberation Sans';color:#0866BF;transform:scaleX(1.0300);-webkit-text-stroke:0.35px currentColor;">280</div>
<div class="t" style="left:1277.32px;top:210.60px;line-height:12px;font:normal normal 11px 'Liberation Sans';color:#0866BF;transform:scaleX(1.0300);-webkit-text-stroke:0.35px currentColor;">380</div>
<div class="t" style="left:1328.92px;top:210.60px;line-height:12px;font:normal normal 11px 'Liberation Sans';color:#0866BF;transform:scaleX(1.0300);-webkit-text-stroke:0.35px currentColor;">420</div>
<div class="t" style="left:1383.67px;top:210.60px;line-height:12px;font:normal normal 11px 'Liberation Sans';color:#111;transform:scaleX(1.0300);-webkit-text-stroke:0.35px currentColor;">243,3</div>
<div class="t" style="left:2.30px;top:229.97px;line-height:12px;font:normal normal 11px 'Liberation Sans';color:#0866BF;transform:scaleX(1.0300);-webkit-text-stroke:0.35px currentColor;">02</div>
<div class="t" style="left:36.80px;top:229.97px;line-height:12px;font:normal normal 11px 'Liberation Sans';color:#0866BF;transform:scaleX(0.9300);-webkit-text-stroke:0.35px currentColor;">Chelsea Boot — Tan</div>
<div class="t" style="left:178.90px;top:229.97px;line-height:12px;font:normal normal 11px 'Liberation Sans';color:#0866BF;transform:scaleX(0.9300);-webkit-text-stroke:0.35px currentColor;">Boots</div>
<div class="t" style="left:256.20px;top:229.97px;line-height:12px;font:normal normal 11px 'Liberation Sans';color:#0866BF;transform:scaleX(0.9300);-webkit-text-stroke:0.35px currentColor;">Seasonal</div>
<div class="t" style="left:353.92px;top:229.97px;line-height:12px;font:normal normal 11px 'Liberation Sans';color:#0866BF;transform:scaleX(1.0300);-webkit-text-stroke:0.35px currentColor;">14</div>
<div class="t" style="left:399.72px;top:229.97px;line-height:12px;font:normal normal 11px 'Liberation Sans';color:#0866BF;transform:scaleX(1.0300);-webkit-text-stroke:0.35px currentColor;">250</div>
<div class="t" style="left:457.12px;top:229.97px;line-height:12px;font:normal normal 11px 'Liberation Sans';color:#0866BF;transform:scaleX(1.0300);-webkit-text-stroke:0.35px currentColor;">60</div>
<div class="t" style="left:515.52px;top:229.97px;line-height:12px;font:normal normal 11px 'Liberation Sans';color:#0866BF;transform:scaleX(1.0300);-webkit-text-stroke:0.35px currentColor;">210</div>
<div class="t" style="left:573.05px;top:229.97px;line-height:12px;font:normal normal 11px 'Liberation Sans';color:#0866BF;transform:scaleX(1.0300);-webkit-text-stroke:0.35px currentColor;">0,0%</div>
<div class="t" style="left:637.55px;top:229.97px;line-height:12px;font:normal normal 11px 'Liberation Sans';color:#0866BF;transform:scaleX(1.0300);-webkit-text-stroke:0.35px currentColor;">0,0%</div>
<div class="t" style="left:712.47px;top:229.97px;line-height:12px;font:normal normal 11px 'Liberation Sans';color:#0866BF;transform:scaleX(1.0300);-webkit-text-stroke:0.35px currentColor;">0,0</div>
<div class="t" style="left:760.72px;top:229.97px;line-height:12px;font:normal normal 11px 'Liberation Sans';color:#0866BF;transform:scaleX(1.0300);-webkit-text-stroke:0.35px currentColor;">290</div>
<div class="t" style="left:812.72px;top:229.97px;line-height:12px;font:normal normal 11px 'Liberation Sans';color:#0866BF;transform:scaleX(1.0300);-webkit-text-stroke:0.35px currentColor;">250</div>
<div class="t" style="left:864.32px;top:229.97px;line-height:12px;font:normal normal 11px 'Liberation Sans';color:#0866BF;transform:scaleX(1.0300);-webkit-text-stroke:0.35px currentColor;">240</div>
<div class="t" style="left:915.62px;top:229.97px;line-height:12px;font:normal normal 11px 'Liberation Sans';color:#0866BF;transform:scaleX(1.0300);-webkit-text-stroke:0.35px currentColor;">165</div>
<div class="t" style="left:967.72px;top:229.97px;line-height:12px;font:normal normal 11px 'Liberation Sans';color:#0866BF;transform:scaleX(1.0300);-webkit-text-stroke:0.35px currentColor;">148</div>
<div class="t" style="left:1019.02px;top:229.97px;line-height:12px;font:normal normal 11px 'Liberation Sans';color:#0866BF;transform:scaleX(1.0300);-webkit-text-stroke:0.35px currentColor;">138</div>
<div class="t" style="left:1071.02px;top:229.97px;line-height:12px;font:normal normal 11px 'Liberation Sans';color:#0866BF;transform:scaleX(1.0300);-webkit-text-stroke:0.35px currentColor;">135</div>
<div class="t" style="left:1122.62px;top:229.97px;line-height:12px;font:normal normal 11px 'Liberation Sans';color:#0866BF;transform:scaleX(1.0300);-webkit-text-stroke:0.35px currentColor;">142</div>
<div class="t" style="left:1174.22px;top:229.97px;line-height:12px;font:normal normal 11px 'Liberation Sans';color:#0866BF;transform:scaleX(1.0300);-webkit-text-stroke:0.35px currentColor;">175</div>
<div class="t" style="left:1225.82px;top:229.97px;line-height:12px;font:normal normal 11px 'Liberation Sans';color:#0866BF;transform:scaleX(1.0300);-webkit-text-stroke:0.35px currentColor;">255</div>
<div class="t" style="left:1277.32px;top:229.97px;line-height:12px;font:normal normal 11px 'Liberation Sans';color:#0866BF;transform:scaleX(1.0300);-webkit-text-stroke:0.35px currentColor;">345</div>
<div class="t" style="left:1328.92px;top:229.97px;line-height:12px;font:normal normal 11px 'Liberation Sans';color:#0866BF;transform:scaleX(1.0300);-webkit-text-stroke:0.35px currentColor;">385</div>
<div class="t" style="left:1383.67px;top:229.97px;line-height:12px;font:normal normal 11px 'Liberation Sans';color:#111;transform:scaleX(1.0300);-webkit-text-stroke:0.35px currentColor;">222,3</div>
<div class="t" style="left:2.30px;top:249.34px;line-height:12px;font:normal normal 11px 'Liberation Sans';color:#0866BF;transform:scaleX(1.0300);-webkit-text-stroke:0.35px currentColor;">03</div>
<div class="t" style="left:36.80px;top:249.34px;line-height:12px;font:normal normal 11px 'Liberation Sans';color:#0866BF;transform:scaleX(0.9300);-webkit-text-stroke:0.35px currentColor;">Ankle Boot — Cognac</div>
<div class="t" style="left:178.90px;top:249.34px;line-height:12px;font:normal normal 11px 'Liberation Sans';color:#0866BF;transform:scaleX(0.9300);-webkit-text-stroke:0.35px currentColor;">Boots</div>
<div class="t" style="left:256.20px;top:249.34px;line-height:12px;font:normal normal 11px 'Liberation Sans';color:#0866BF;transform:scaleX(0.9300);-webkit-text-stroke:0.35px currentColor;">Seasonal</div>
<div class="t" style="left:353.92px;top:249.34px;line-height:12px;font:normal normal 11px 'Liberation Sans';color:#0866BF;transform:scaleX(1.0300);-webkit-text-stroke:0.35px currentColor;">14</div>
<div class="t" style="left:399.72px;top:249.34px;line-height:12px;font:normal normal 11px 'Liberation Sans';color:#0866BF;transform:scaleX(1.0300);-webkit-text-stroke:0.35px currentColor;">200</div>
<div class="t" style="left:457.12px;top:249.34px;line-height:12px;font:normal normal 11px 'Liberation Sans';color:#0866BF;transform:scaleX(1.0300);-webkit-text-stroke:0.35px currentColor;">60</div>
<div class="t" style="left:515.52px;top:249.34px;line-height:12px;font:normal normal 11px 'Liberation Sans';color:#0866BF;transform:scaleX(1.0300);-webkit-text-stroke:0.35px currentColor;">310</div>
<div class="t" style="left:573.05px;top:249.34px;line-height:12px;font:normal normal 11px 'Liberation Sans';color:#0866BF;transform:scaleX(1.0300);-webkit-text-stroke:0.35px currentColor;">5,0%</div>
<div class="t" style="left:637.55px;top:249.34px;line-height:12px;font:normal normal 11px 'Liberation Sans';color:#0866BF;transform:scaleX(1.0300);-webkit-text-stroke:0.35px currentColor;">0,0%</div>
<div class="t" style="left:712.47px;top:249.34px;line-height:12px;font:normal normal 11px 'Liberation Sans';color:#0866BF;transform:scaleX(1.0300);-webkit-text-stroke:0.35px currentColor;">0,0</div>
<div class="t" style="left:760.72px;top:249.34px;line-height:12px;font:normal normal 11px 'Liberation Sans';color:#0866BF;transform:scaleX(1.0300);-webkit-text-stroke:0.35px currentColor;">180</div>
<div class="t" style="left:812.72px;top:249.34px;line-height:12px;font:normal normal 11px 'Liberation Sans';color:#0866BF;transform:scaleX(1.0300);-webkit-text-stroke:0.35px currentColor;">155</div>
<div class="t" style="left:864.32px;top:249.34px;line-height:12px;font:normal normal 11px 'Liberation Sans';color:#0866BF;transform:scaleX(1.0300);-webkit-text-stroke:0.35px currentColor;">165</div>
<div class="t" style="left:915.62px;top:249.34px;line-height:12px;font:normal normal 11px 'Liberation Sans';color:#0866BF;transform:scaleX(1.0300);-webkit-text-stroke:0.35px currentColor;">120</div>
<div class="t" style="left:968.56px;top:249.34px;line-height:12px;font:normal normal 11px 'Liberation Sans';color:#0866BF;transform:scaleX(1.0300);-webkit-text-stroke:0.35px currentColor;">110</div>
<div class="t" style="left:1019.02px;top:249.34px;line-height:12px;font:normal normal 11px 'Liberation Sans';color:#0866BF;transform:scaleX(1.0300);-webkit-text-stroke:0.35px currentColor;">105</div>
<div class="t" style="left:1071.02px;top:249.34px;line-height:12px;font:normal normal 11px 'Liberation Sans';color:#0866BF;transform:scaleX(1.0300);-webkit-text-stroke:0.35px currentColor;">108</div>
<div class="t" style="left:1123.46px;top:249.34px;line-height:12px;font:normal normal 11px 'Liberation Sans';color:#0866BF;transform:scaleX(1.0300);-webkit-text-stroke:0.35px currentColor;">115</div>
<div class="t" style="left:1174.22px;top:249.34px;line-height:12px;font:normal normal 11px 'Liberation Sans';color:#0866BF;transform:scaleX(1.0300);-webkit-text-stroke:0.35px currentColor;">145</div>
<div class="t" style="left:1225.82px;top:249.34px;line-height:12px;font:normal normal 11px 'Liberation Sans';color:#0866BF;transform:scaleX(1.0300);-webkit-text-stroke:0.35px currentColor;">205</div>
<div class="t" style="left:1277.32px;top:249.34px;line-height:12px;font:normal normal 11px 'Liberation Sans';color:#0866BF;transform:scaleX(1.0300);-webkit-text-stroke:0.35px currentColor;">280</div>
<div class="t" style="left:1328.92px;top:249.34px;line-height:12px;font:normal normal 11px 'Liberation Sans';color:#0866BF;transform:scaleX(1.0300);-webkit-text-stroke:0.35px currentColor;">315</div>
<div class="t" style="left:1383.67px;top:249.34px;line-height:12px;font:normal normal 11px 'Liberation Sans';color:#111;transform:scaleX(1.0300);-webkit-text-stroke:0.35px currentColor;">166,9</div>
<div class="t" style="left:2.30px;top:268.71px;line-height:12px;font:normal normal 11px 'Liberation Sans';color:#0866BF;transform:scaleX(1.0300);-webkit-text-stroke:0.35px currentColor;">04</div>
<div class="t" style="left:36.80px;top:268.71px;line-height:12px;font:normal normal 11px 'Liberation Sans';color:#0866BF;transform:scaleX(0.9300);-webkit-text-stroke:0.35px currentColor;">Ankle Boot — Black</div>
<div class="t" style="left:178.90px;top:268.71px;line-height:12px;font:normal normal 11px 'Liberation Sans';color:#0866BF;transform:scaleX(0.9300);-webkit-text-stroke:0.35px currentColor;">Boots</div>
<div class="t" style="left:256.20px;top:268.71px;line-height:12px;font:normal normal 11px 'Liberation Sans';color:#0866BF;transform:scaleX(0.9300);-webkit-text-stroke:0.35px currentColor;">Seasonal</div>
<div class="t" style="left:353.92px;top:268.71px;line-height:12px;font:normal normal 11px 'Liberation Sans';color:#0866BF;transform:scaleX(1.0300);-webkit-text-stroke:0.35px currentColor;">14</div>
<div class="t" style="left:399.72px;top:268.71px;line-height:12px;font:normal normal 11px 'Liberation Sans';color:#0866BF;transform:scaleX(1.0300);-webkit-text-stroke:0.35px currentColor;">250</div>
<div class="t" style="left:457.12px;top:268.71px;line-height:12px;font:normal normal 11px 'Liberation Sans';color:#0866BF;transform:scaleX(1.0300);-webkit-text-stroke:0.35px currentColor;">70</div>
<div class="t" style="left:521.82px;top:268.71px;line-height:12px;font:normal normal 11px 'Liberation Sans';color:#0866BF;transform:scaleX(1.0300);-webkit-text-stroke:0.35px currentColor;">88</div>
<div class="t" style="left:573.05px;top:268.71px;line-height:12px;font:normal normal 11px 'Liberation Sans';color:#0866BF;transform:scaleX(1.0300);-webkit-text-stroke:0.35px currentColor;">0,0%</div>
<div class="t" style="left:637.55px;top:268.71px;line-height:12px;font:normal normal 11px 'Liberation Sans';color:#0866BF;transform:scaleX(1.0300);-webkit-text-stroke:0.35px currentColor;">0,0%</div>
<div class="t" style="left:712.47px;top:268.71px;line-height:12px;font:normal normal 11px 'Liberation Sans';color:#0866BF;transform:scaleX(1.0300);-webkit-text-stroke:0.35px currentColor;">0,0</div>
<div class="t" style="left:760.72px;top:268.71px;line-height:12px;font:normal normal 11px 'Liberation Sans';color:#0866BF;transform:scaleX(1.0300);-webkit-text-stroke:0.35px currentColor;">200</div>
<div class="t" style="left:812.72px;top:268.71px;line-height:12px;font:normal normal 11px 'Liberation Sans';color:#0866BF;transform:scaleX(1.0300);-webkit-text-stroke:0.35px currentColor;">175</div>
<div class="t" style="left:864.32px;top:268.71px;line-height:12px;font:normal normal 11px 'Liberation Sans';color:#0866BF;transform:scaleX(1.0300);-webkit-text-stroke:0.35px currentColor;">180</div>
<div class="t" style="left:915.62px;top:268.71px;line-height:12px;font:normal normal 11px 'Liberation Sans';color:#0866BF;transform:scaleX(1.0300);-webkit-text-stroke:0.35px currentColor;">135</div>
<div class="t" style="left:967.72px;top:268.71px;line-height:12px;font:normal normal 11px 'Liberation Sans';color:#0866BF;transform:scaleX(1.0300);-webkit-text-stroke:0.35px currentColor;">120</div>
<div class="t" style="left:1019.86px;top:268.71px;line-height:12px;font:normal normal 11px 'Liberation Sans';color:#0866BF;transform:scaleX(1.0300);-webkit-text-stroke:0.35px currentColor;">112</div>
<div class="t" style="left:1071.86px;top:268.71px;line-height:12px;font:normal normal 11px 'Liberation Sans';color:#0866BF;transform:scaleX(1.0300);-webkit-text-stroke:0.35px currentColor;">115</div>
<div class="t" style="left:1122.62px;top:268.71px;line-height:12px;font:normal normal 11px 'Liberation Sans';color:#0866BF;transform:scaleX(1.0300);-webkit-text-stroke:0.35px currentColor;">125</div>
<div class="t" style="left:1174.22px;top:268.71px;line-height:12px;font:normal normal 11px 'Liberation Sans';color:#0866BF;transform:scaleX(1.0300);-webkit-text-stroke:0.35px currentColor;">155</div>
<div class="t" style="left:1225.82px;top:268.71px;line-height:12px;font:normal normal 11px 'Liberation Sans';color:#0866BF;transform:scaleX(1.0300);-webkit-text-stroke:0.35px currentColor;">225</div>
<div class="t" style="left:1277.32px;top:268.71px;line-height:12px;font:normal normal 11px 'Liberation Sans';color:#0866BF;transform:scaleX(1.0300);-webkit-text-stroke:0.35px currentColor;">305</div>
<div class="t" style="left:1328.92px;top:268.71px;line-height:12px;font:normal normal 11px 'Liberation Sans';color:#0866BF;transform:scaleX(1.0300);-webkit-text-stroke:0.35px currentColor;">340</div>
<div class="t" style="left:1383.67px;top:268.71px;line-height:12px;font:normal normal 11px 'Liberation Sans';color:#111;transform:scaleX(1.0300);-webkit-text-stroke:0.35px currentColor;">182,3</div>
<div class="t" style="left:2.30px;top:288.08px;line-height:12px;font:normal normal 11px 'Liberation Sans';color:#0866BF;transform:scaleX(1.0300);-webkit-text-stroke:0.35px currentColor;">05</div>
<div class="t" style="left:36.80px;top:288.08px;line-height:12px;font:normal normal 11px 'Liberation Sans';color:#0866BF;transform:scaleX(0.9300);-webkit-text-stroke:0.35px currentColor;">Sneaker — White Canvas</div>
<div class="t" style="left:178.90px;top:288.08px;line-height:12px;font:normal normal 11px 'Liberation Sans';color:#0866BF;transform:scaleX(0.9300);-webkit-text-stroke:0.35px currentColor;">Sneakers</div>
<div class="t" style="left:256.20px;top:288.08px;line-height:12px;font:normal normal 11px 'Liberation Sans';color:#0866BF;transform:scaleX(0.9300);-webkit-text-stroke:0.35px currentColor;">Core</div>
<div class="t" style="left:353.92px;top:288.08px;line-height:12px;font:normal normal 11px 'Liberation Sans';color:#0866BF;transform:scaleX(1.0300);-webkit-text-stroke:0.35px currentColor;">21</div>
<div class="t" style="left:399.72px;top:288.08px;line-height:12px;font:normal normal 11px 'Liberation Sans';color:#0866BF;transform:scaleX(1.0300);-webkit-text-stroke:0.35px currentColor;">400</div>
<div class="t" style="left:450.82px;top:288.08px;line-height:12px;font:normal normal 11px 'Liberation Sans';color:#0866BF;transform:scaleX(1.0300);-webkit-text-stroke:0.35px currentColor;">100</div>
<div class="t" style="left:515.52px;top:288.08px;line-height:12px;font:normal normal 11px 'Liberation Sans';color:#0866BF;transform:scaleX(1.0300);-webkit-text-stroke:0.35px currentColor;">560</div>
<div class="t" style="left:566.75px;top:288.08px;line-height:12px;font:normal normal 11px 'Liberation Sans';color:#0866BF;transform:scaleX(1.0300);-webkit-text-stroke:0.35px currentColor;">10,0%</div>
<div class="t" style="left:637.55px;top:288.08px;line-height:12px;font:normal normal 11px 'Liberation Sans';color:#0866BF;transform:scaleX(1.0300);-webkit-text-stroke:0.35px currentColor;">0,0%</div>
<div class="t" style="left:712.47px;top:288.08px;line-height:12px;font:normal normal 11px 'Liberation Sans';color:#0866BF;transform:scaleX(1.0300);-webkit-text-stroke:0.35px currentColor;">0,0</div>
<div class="t" style="left:760.72px;top:288.08px;line-height:12px;font:normal normal 11px 'Liberation Sans';color:#0866BF;transform:scaleX(1.0300);-webkit-text-stroke:0.35px currentColor;">380</div>
<div class="t" style="left:812.72px;top:288.08px;line-height:12px;font:normal normal 11px 'Liberation Sans';color:#0866BF;transform:scaleX(1.0300);-webkit-text-stroke:0.35px currentColor;">395</div>
<div class="t" style="left:864.32px;top:288.08px;line-height:12px;font:normal normal 11px 'Liberation Sans';color:#0866BF;transform:scaleX(1.0300);-webkit-text-stroke:0.35px currentColor;">420</div>
<div class="t" style="left:915.62px;top:288.08px;line-height:12px;font:normal normal 11px 'Liberation Sans';color:#0866BF;transform:scaleX(1.0300);-webkit-text-stroke:0.35px currentColor;">440</div>
<div class="t" style="left:967.72px;top:288.08px;line-height:12px;font:normal normal 11px 'Liberation Sans';color:#0866BF;transform:scaleX(1.0300);-webkit-text-stroke:0.35px currentColor;">460</div>
<div class="t" style="left:1019.02px;top:288.08px;line-height:12px;font:normal normal 11px 'Liberation Sans';color:#0866BF;transform:scaleX(1.0300);-webkit-text-stroke:0.35px currentColor;">475</div>
<div class="t" style="left:1071.02px;top:288.08px;line-height:12px;font:normal normal 11px 'Liberation Sans';color:#0866BF;transform:scaleX(1.0300);-webkit-text-stroke:0.35px currentColor;">485</div>
<div class="t" style="left:1122.62px;top:288.08px;line-height:12px;font:normal normal 11px 'Liberation Sans';color:#0866BF;transform:scaleX(1.0300);-webkit-text-stroke:0.35px currentColor;">490</div>
<div class="t" style="left:1174.22px;top:288.08px;line-height:12px;font:normal normal 11px 'Liberation Sans';color:#0866BF;transform:scaleX(1.0300);-webkit-text-stroke:0.35px currentColor;">445</div>
<div class="t" style="left:1225.82px;top:288.08px;line-height:12px;font:normal normal 11px 'Liberation Sans';color:#0866BF;transform:scaleX(1.0300);-webkit-text-stroke:0.35px currentColor;">400</div>
<div class="t" style="left:1277.32px;top:288.08px;line-height:12px;font:normal normal 11px 'Liberation Sans';color:#0866BF;transform:scaleX(1.0300);-webkit-text-stroke:0.35px currentColor;">350</div>
<div class="t" style="left:1328.92px;top:288.08px;line-height:12px;font:normal normal 11px 'Liberation Sans';color:#0866BF;transform:scaleX(1.0300);-webkit-text-stroke:0.35px currentColor;">330</div>
<div class="t" style="left:1383.67px;top:288.08px;line-height:12px;font:normal normal 11px 'Liberation Sans';color:#111;transform:scaleX(1.0300);-webkit-text-stroke:0.35px currentColor;">422,5</div>
<div class="t" style="left:2.30px;top:307.45px;line-height:12px;font:normal normal 11px 'Liberation Sans';color:#0866BF;transform:scaleX(1.0300);-webkit-text-stroke:0.35px currentColor;">06</div>
<div class="t" style="left:36.80px;top:307.45px;line-height:12px;font:normal normal 11px 'Liberation Sans';color:#0866BF;transform:scaleX(0.9300);-webkit-text-stroke:0.35px currentColor;">Sneaker — Navy Canvas</div>
<div class="t" style="left:178.90px;top:307.45px;line-height:12px;font:normal normal 11px 'Liberation Sans';color:#0866BF;transform:scaleX(0.9300);-webkit-text-stroke:0.35px currentColor;">Sneakers</div>
<div class="t" style="left:256.20px;top:307.45px;line-height:12px;font:normal normal 11px 'Liberation Sans';color:#0866BF;transform:scaleX(0.9300);-webkit-text-stroke:0.35px currentColor;">Core</div>
<div class="t" style="left:353.92px;top:307.45px;line-height:12px;font:normal normal 11px 'Liberation Sans';color:#0866BF;transform:scaleX(1.0300);-webkit-text-stroke:0.35px currentColor;">21</div>
<div class="t" style="left:399.72px;top:307.45px;line-height:12px;font:normal normal 11px 'Liberation Sans';color:#0866BF;transform:scaleX(1.0300);-webkit-text-stroke:0.35px currentColor;">350</div>
<div class="t" style="left:457.12px;top:307.45px;line-height:12px;font:normal normal 11px 'Liberation Sans';color:#0866BF;transform:scaleX(1.0300);-webkit-text-stroke:0.35px currentColor;">90</div>
<div class="t" style="left:515.52px;top:307.45px;line-height:12px;font:normal normal 11px 'Liberation Sans';color:#0866BF;transform:scaleX(1.0300);-webkit-text-stroke:0.35px currentColor;">240</div>
<div class="t" style="left:573.05px;top:307.45px;line-height:12px;font:normal normal 11px 'Liberation Sans';color:#0866BF;transform:scaleX(1.0300);-webkit-text-stroke:0.35px currentColor;">0,0%</div>
<div class="t" style="left:637.55px;top:307.45px;line-height:12px;font:normal normal 11px 'Liberation Sans';color:#0866BF;transform:scaleX(1.0300);-webkit-text-stroke:0.35px currentColor;">0,0%</div>
<div class="t" style="left:712.47px;top:307.45px;line-height:12px;font:normal normal 11px 'Liberation Sans';color:#0866BF;transform:scaleX(1.0300);-webkit-text-stroke:0.35px currentColor;">0,0</div>
<div class="t" style="left:760.72px;top:307.45px;line-height:12px;font:normal normal 11px 'Liberation Sans';color:#0866BF;transform:scaleX(1.0300);-webkit-text-stroke:0.35px currentColor;">335</div>
<div class="t" style="left:812.72px;top:307.45px;line-height:12px;font:normal normal 11px 'Liberation Sans';color:#0866BF;transform:scaleX(1.0300);-webkit-text-stroke:0.35px currentColor;">350</div>
<div class="t" style="left:864.32px;top:307.45px;line-height:12px;font:normal normal 11px 'Liberation Sans';color:#0866BF;transform:scaleX(1.0300);-webkit-text-stroke:0.35px currentColor;">370</div>
<div class="t" style="left:915.62px;top:307.45px;line-height:12px;font:normal normal 11px 'Liberation Sans';color:#0866BF;transform:scaleX(1.0300);-webkit-text-stroke:0.35px currentColor;">390</div>
<div class="t" style="left:967.72px;top:307.45px;line-height:12px;font:normal normal 11px 'Liberation Sans';color:#0866BF;transform:scaleX(1.0300);-webkit-text-stroke:0.35px currentColor;">408</div>
<div class="t" style="left:1019.02px;top:307.45px;line-height:12px;font:normal normal 11px 'Liberation Sans';color:#0866BF;transform:scaleX(1.0300);-webkit-text-stroke:0.35px currentColor;">420</div>
<div class="t" style="left:1071.02px;top:307.45px;line-height:12px;font:normal normal 11px 'Liberation Sans';color:#0866BF;transform:scaleX(1.0300);-webkit-text-stroke:0.35px currentColor;">430</div>
<div class="t" style="left:1122.62px;top:307.45px;line-height:12px;font:normal normal 11px 'Liberation Sans';color:#0866BF;transform:scaleX(1.0300);-webkit-text-stroke:0.35px currentColor;">435</div>
<div class="t" style="left:1174.22px;top:307.45px;line-height:12px;font:normal normal 11px 'Liberation Sans';color:#0866BF;transform:scaleX(1.0300);-webkit-text-stroke:0.35px currentColor;">395</div>
<div class="t" style="left:1225.82px;top:307.45px;line-height:12px;font:normal normal 11px 'Liberation Sans';color:#0866BF;transform:scaleX(1.0300);-webkit-text-stroke:0.35px currentColor;">355</div>
<div class="t" style="left:1277.32px;top:307.45px;line-height:12px;font:normal normal 11px 'Liberation Sans';color:#0866BF;transform:scaleX(1.0300);-webkit-text-stroke:0.35px currentColor;">310</div>
<div class="t" style="left:1328.92px;top:307.45px;line-height:12px;font:normal normal 11px 'Liberation Sans';color:#0866BF;transform:scaleX(1.0300);-webkit-text-stroke:0.35px currentColor;">295</div>
<div class="t" style="left:1383.67px;top:307.45px;line-height:12px;font:normal normal 11px 'Liberation Sans';color:#111;transform:scaleX(1.0300);-webkit-text-stroke:0.35px currentColor;">374,4</div>
<div class="t" style="left:2.30px;top:326.82px;line-height:12px;font:normal normal 11px 'Liberation Sans';color:#0866BF;transform:scaleX(1.0300);-webkit-text-stroke:0.35px currentColor;">07</div>
<div class="t" style="left:36.80px;top:326.82px;line-height:12px;font:normal normal 11px 'Liberation Sans';color:#0866BF;transform:scaleX(0.9300);-webkit-text-stroke:0.35px currentColor;">Sneaker — Eco Sole</div>
<div class="t" style="left:178.90px;top:326.82px;line-height:12px;font:normal normal 11px 'Liberation Sans';color:#0866BF;transform:scaleX(0.9300);-webkit-text-stroke:0.35px currentColor;">Sneakers</div>
<div class="t" style="left:256.20px;top:326.82px;line-height:12px;font:normal normal 11px 'Liberation Sans';color:#0866BF;transform:scaleX(0.9300);-webkit-text-stroke:0.35px currentColor;">Core</div>
<div class="t" style="left:353.92px;top:326.82px;line-height:12px;font:normal normal 11px 'Liberation Sans';color:#0866BF;transform:scaleX(1.0300);-webkit-text-stroke:0.35px currentColor;">28</div>
<div class="t" style="left:399.72px;top:326.82px;line-height:12px;font:normal normal 11px 'Liberation Sans';color:#0866BF;transform:scaleX(1.0300);-webkit-text-stroke:0.35px currentColor;">300</div>
<div class="t" style="left:457.12px;top:326.82px;line-height:12px;font:normal normal 11px 'Liberation Sans';color:#0866BF;transform:scaleX(1.0300);-webkit-text-stroke:0.35px currentColor;">80</div>
<div class="t" style="left:515.52px;top:326.82px;line-height:12px;font:normal normal 11px 'Liberation Sans';color:#0866BF;transform:scaleX(1.0300);-webkit-text-stroke:0.35px currentColor;">180</div>
<div class="t" style="left:573.05px;top:326.82px;line-height:12px;font:normal normal 11px 'Liberation Sans';color:#0866BF;transform:scaleX(1.0300);-webkit-text-stroke:0.35px currentColor;">5,0%</div>
<div class="t" style="left:637.55px;top:326.82px;line-height:12px;font:normal normal 11px 'Liberation Sans';color:#0866BF;transform:scaleX(1.0300);-webkit-text-stroke:0.35px currentColor;">5,0%</div>
<div class="t" style="left:708.70px;top:326.82px;line-height:12px;font:normal normal 11px 'Liberation Sans';color:#0866BF;transform:scaleX(1.0300);-webkit-text-stroke:0.35px currentColor;">-0,3</div>
<div class="t" style="left:760.72px;top:326.82px;line-height:12px;font:normal normal 11px 'Liberation Sans';color:#0866BF;transform:scaleX(1.0300);-webkit-text-stroke:0.35px currentColor;">240</div>
<div class="t" style="left:812.72px;top:326.82px;line-height:12px;font:normal normal 11px 'Liberation Sans';color:#0866BF;transform:scaleX(1.0300);-webkit-text-stroke:0.35px currentColor;">255</div>
<div class="t" style="left:864.32px;top:326.82px;line-height:12px;font:normal normal 11px 'Liberation Sans';color:#0866BF;transform:scaleX(1.0300);-webkit-text-stroke:0.35px currentColor;">270</div>
<div class="t" style="left:915.62px;top:326.82px;line-height:12px;font:normal normal 11px 'Liberation Sans';color:#0866BF;transform:scaleX(1.0300);-webkit-text-stroke:0.35px currentColor;">285</div>
<div class="t" style="left:967.72px;top:326.82px;line-height:12px;font:normal normal 11px 'Liberation Sans';color:#0866BF;transform:scaleX(1.0300);-webkit-text-stroke:0.35px currentColor;">300</div>
<div class="t" style="left:1019.02px;top:326.82px;line-height:12px;font:normal normal 11px 'Liberation Sans';color:#0866BF;transform:scaleX(1.0300);-webkit-text-stroke:0.35px currentColor;">308</div>
<div class="t" style="left:1071.02px;top:326.82px;line-height:12px;font:normal normal 11px 'Liberation Sans';color:#0866BF;transform:scaleX(1.0300);-webkit-text-stroke:0.35px currentColor;">315</div>
<div class="t" style="left:1122.62px;top:326.82px;line-height:12px;font:normal normal 11px 'Liberation Sans';color:#0866BF;transform:scaleX(1.0300);-webkit-text-stroke:0.35px currentColor;">318</div>
<div class="t" style="left:1174.22px;top:326.82px;line-height:12px;font:normal normal 11px 'Liberation Sans';color:#0866BF;transform:scaleX(1.0300);-webkit-text-stroke:0.35px currentColor;">290</div>
<div class="t" style="left:1225.82px;top:326.82px;line-height:12px;font:normal normal 11px 'Liberation Sans';color:#0866BF;transform:scaleX(1.0300);-webkit-text-stroke:0.35px currentColor;">260</div>
<div class="t" style="left:1277.32px;top:326.82px;line-height:12px;font:normal normal 11px 'Liberation Sans';color:#0866BF;transform:scaleX(1.0300);-webkit-text-stroke:0.35px currentColor;">228</div>
<div class="t" style="left:1328.92px;top:326.82px;line-height:12px;font:normal normal 11px 'Liberation Sans';color:#0866BF;transform:scaleX(1.0300);-webkit-text-stroke:0.35px currentColor;">215</div>
<div class="t" style="left:1383.67px;top:326.82px;line-height:12px;font:normal normal 11px 'Liberation Sans';color:#111;transform:scaleX(1.0300);-webkit-text-stroke:0.35px currentColor;">273,7</div>
<div class="t" style="left:2.30px;top:346.19px;line-height:12px;font:normal normal 11px 'Liberation Sans';color:#0866BF;transform:scaleX(1.0300);-webkit-text-stroke:0.35px currentColor;">08</div>
<div class="t" style="left:36.80px;top:346.19px;line-height:12px;font:normal normal 11px 'Liberation Sans';color:#0866BF;transform:scaleX(0.9300);-webkit-text-stroke:0.35px currentColor;">Sandal — Woven Tan</div>
<div class="t" style="left:178.90px;top:346.19px;line-height:12px;font:normal normal 11px 'Liberation Sans';color:#0866BF;transform:scaleX(0.9300);-webkit-text-stroke:0.35px currentColor;">Sandals</div>
<div class="t" style="left:256.20px;top:346.19px;line-height:12px;font:normal normal 11px 'Liberation Sans';color:#0866BF;transform:scaleX(0.9300);-webkit-text-stroke:0.35px currentColor;">Seasonal</div>
<div class="t" style="left:353.92px;top:346.19px;line-height:12px;font:normal normal 11px 'Liberation Sans';color:#0866BF;transform:scaleX(1.0300);-webkit-text-stroke:0.35px currentColor;">21</div>
<div class="t" style="left:399.72px;top:346.19px;line-height:12px;font:normal normal 11px 'Liberation Sans';color:#0866BF;transform:scaleX(1.0300);-webkit-text-stroke:0.35px currentColor;">250</div>
<div class="t" style="left:457.12px;top:346.19px;line-height:12px;font:normal normal 11px 'Liberation Sans';color:#0866BF;transform:scaleX(1.0300);-webkit-text-stroke:0.35px currentColor;">60</div>
<div class="t" style="left:521.82px;top:346.19px;line-height:12px;font:normal normal 11px 'Liberation Sans';color:#0866BF;transform:scaleX(1.0300);-webkit-text-stroke:0.35px currentColor;">45</div>
<div class="t" style="left:573.05px;top:346.19px;line-height:12px;font:normal normal 11px 'Liberation Sans';color:#0866BF;transform:scaleX(1.0300);-webkit-text-stroke:0.35px currentColor;">0,0%</div>
<div class="t" style="left:637.55px;top:346.19px;line-height:12px;font:normal normal 11px 'Liberation Sans';color:#0866BF;transform:scaleX(1.0300);-webkit-text-stroke:0.35px currentColor;">0,0%</div>
<div class="t" style="left:712.47px;top:346.19px;line-height:12px;font:normal normal 11px 'Liberation Sans';color:#0866BF;transform:scaleX(1.0300);-webkit-text-stroke:0.35px currentColor;">0,0</div>
<div class="t" style="left:767.02px;top:346.19px;line-height:12px;font:normal normal 11px 'Liberation Sans';color:#0866BF;transform:scaleX(1.0300);-webkit-text-stroke:0.35px currentColor;">85</div>
<div class="t" style="left:813.56px;top:346.19px;line-height:12px;font:normal normal 11px 'Liberation Sans';color:#0866BF;transform:scaleX(1.0300);-webkit-text-stroke:0.35px currentColor;">110</div>
<div class="t" style="left:864.32px;top:346.19px;line-height:12px;font:normal normal 11px 'Liberation Sans';color:#0866BF;transform:scaleX(1.0300);-webkit-text-stroke:0.35px currentColor;">175</div>
<div class="t" style="left:915.62px;top:346.19px;line-height:12px;font:normal normal 11px 'Liberation Sans';color:#0866BF;transform:scaleX(1.0300);-webkit-text-stroke:0.35px currentColor;">250</div>
<div class="t" style="left:967.72px;top:346.19px;line-height:12px;font:normal normal 11px 'Liberation Sans';color:#0866BF;transform:scaleX(1.0300);-webkit-text-stroke:0.35px currentColor;">310</div>
<div class="t" style="left:1019.02px;top:346.19px;line-height:12px;font:normal normal 11px 'Liberation Sans';color:#0866BF;transform:scaleX(1.0300);-webkit-text-stroke:0.35px currentColor;">340</div>
<div class="t" style="left:1071.02px;top:346.19px;line-height:12px;font:normal normal 11px 'Liberation Sans';color:#0866BF;transform:scaleX(1.0300);-webkit-text-stroke:0.35px currentColor;">335</div>
<div class="t" style="left:1122.62px;top:346.19px;line-height:12px;font:normal normal 11px 'Liberation Sans';color:#0866BF;transform:scaleX(1.0300);-webkit-text-stroke:0.35px currentColor;">290</div>
<div class="t" style="left:1174.22px;top:346.19px;line-height:12px;font:normal normal 11px 'Liberation Sans';color:#0866BF;transform:scaleX(1.0300);-webkit-text-stroke:0.35px currentColor;">210</div>
<div class="t" style="left:1225.82px;top:346.19px;line-height:12px;font:normal normal 11px 'Liberation Sans';color:#0866BF;transform:scaleX(1.0300);-webkit-text-stroke:0.35px currentColor;">120</div>
<div class="t" style="left:1283.62px;top:346.19px;line-height:12px;font:normal normal 11px 'Liberation Sans';color:#0866BF;transform:scaleX(1.0300);-webkit-text-stroke:0.35px currentColor;">70</div>
<div class="t" style="left:1335.22px;top:346.19px;line-height:12px;font:normal normal 11px 'Liberation Sans';color:#0866BF;transform:scaleX(1.0300);-webkit-text-stroke:0.35px currentColor;">50</div>
<div class="t" style="left:1383.67px;top:346.19px;line-height:12px;font:normal normal 11px 'Liberation Sans';color:#111;transform:scaleX(1.0300);-webkit-text-stroke:0.35px currentColor;">195,4</div>
<div class="t" style="left:2.30px;top:365.56px;line-height:12px;font:normal normal 11px 'Liberation Sans';color:#0866BF;transform:scaleX(1.0300);-webkit-text-stroke:0.35px currentColor;">09</div>
<div class="t" style="left:36.80px;top:365.56px;line-height:12px;font:normal normal 11px 'Liberation Sans';color:#0866BF;transform:scaleX(0.9300);-webkit-text-stroke:0.35px currentColor;">Sandal — Black Leather</div>
<div class="t" style="left:178.90px;top:365.56px;line-height:12px;font:normal normal 11px 'Liberation Sans';color:#0866BF;transform:scaleX(0.9300);-webkit-text-stroke:0.35px currentColor;">Sandals</div>
<div class="t" style="left:256.20px;top:365.56px;line-height:12px;font:normal normal 11px 'Liberation Sans';color:#0866BF;transform:scaleX(0.9300);-webkit-text-stroke:0.35px currentColor;">Seasonal</div>
<div class="t" style="left:353.92px;top:365.56px;line-height:12px;font:normal normal 11px 'Liberation Sans';color:#0866BF;transform:scaleX(1.0300);-webkit-text-stroke:0.35px currentColor;">21</div>
<div class="t" style="left:399.72px;top:365.56px;line-height:12px;font:normal normal 11px 'Liberation Sans';color:#0866BF;transform:scaleX(1.0300);-webkit-text-stroke:0.35px currentColor;">200</div>
<div class="t" style="left:457.12px;top:365.56px;line-height:12px;font:normal normal 11px 'Liberation Sans';color:#0866BF;transform:scaleX(1.0300);-webkit-text-stroke:0.35px currentColor;">55</div>
<div class="t" style="left:515.52px;top:365.56px;line-height:12px;font:normal normal 11px 'Liberation Sans';color:#0866BF;transform:scaleX(1.0300);-webkit-text-stroke:0.35px currentColor;">320</div>
<div class="t" style="left:573.05px;top:365.56px;line-height:12px;font:normal normal 11px 'Liberation Sans';color:#0866BF;transform:scaleX(1.0300);-webkit-text-stroke:0.35px currentColor;">0,0%</div>
<div class="t" style="left:637.55px;top:365.56px;line-height:12px;font:normal normal 11px 'Liberation Sans';color:#0866BF;transform:scaleX(1.0300);-webkit-text-stroke:0.35px currentColor;">0,0%</div>
<div class="t" style="left:712.47px;top:365.56px;line-height:12px;font:normal normal 11px 'Liberation Sans';color:#0866BF;transform:scaleX(1.0300);-webkit-text-stroke:0.35px currentColor;">0,0</div>
<div class="t" style="left:767.02px;top:365.56px;line-height:12px;font:normal normal 11px 'Liberation Sans';color:#0866BF;transform:scaleX(1.0300);-webkit-text-stroke:0.35px currentColor;">90</div>
<div class="t" style="left:813.56px;top:365.56px;line-height:12px;font:normal normal 11px 'Liberation Sans';color:#0866BF;transform:scaleX(1.0300);-webkit-text-stroke:0.35px currentColor;">118</div>
<div class="t" style="left:864.32px;top:365.56px;line-height:12px;font:normal normal 11px 'Liberation Sans';color:#0866BF;transform:scaleX(1.0300);-webkit-text-stroke:0.35px currentColor;">185</div>
<div class="t" style="left:915.62px;top:365.56px;line-height:12px;font:normal normal 11px 'Liberation Sans';color:#0866BF;transform:scaleX(1.0300);-webkit-text-stroke:0.35px currentColor;">265</div>
<div class="t" style="left:967.72px;top:365.56px;line-height:12px;font:normal normal 11px 'Liberation Sans';color:#0866BF;transform:scaleX(1.0300);-webkit-text-stroke:0.35px currentColor;">328</div>
<div class="t" style="left:1019.02px;top:365.56px;line-height:12px;font:normal normal 11px 'Liberation Sans';color:#0866BF;transform:scaleX(1.0300);-webkit-text-stroke:0.35px currentColor;">358</div>
<div class="t" style="left:1071.02px;top:365.56px;line-height:12px;font:normal normal 11px 'Liberation Sans';color:#0866BF;transform:scaleX(1.0300);-webkit-text-stroke:0.35px currentColor;">350</div>
<div class="t" style="left:1122.62px;top:365.56px;line-height:12px;font:normal normal 11px 'Liberation Sans';color:#0866BF;transform:scaleX(1.0300);-webkit-text-stroke:0.35px currentColor;">305</div>
<div class="t" style="left:1174.22px;top:365.56px;line-height:12px;font:normal normal 11px 'Liberation Sans';color:#0866BF;transform:scaleX(1.0300);-webkit-text-stroke:0.35px currentColor;">220</div>
<div class="t" style="left:1225.82px;top:365.56px;line-height:12px;font:normal normal 11px 'Liberation Sans';color:#0866BF;transform:scaleX(1.0300);-webkit-text-stroke:0.35px currentColor;">128</div>
<div class="t" style="left:1283.62px;top:365.56px;line-height:12px;font:normal normal 11px 'Liberation Sans';color:#0866BF;transform:scaleX(1.0300);-webkit-text-stroke:0.35px currentColor;">75</div>
<div class="t" style="left:1335.22px;top:365.56px;line-height:12px;font:normal normal 11px 'Liberation Sans';color:#0866BF;transform:scaleX(1.0300);-webkit-text-stroke:0.35px currentColor;">55</div>
<div class="t" style="left:1383.67px;top:365.56px;line-height:12px;font:normal normal 11px 'Liberation Sans';color:#111;transform:scaleX(1.0300);-webkit-text-stroke:0.35px currentColor;">206,4</div>
<div class="t" style="left:2.30px;top:384.93px;line-height:12px;font:normal normal 11px 'Liberation Sans';color:#0866BF;transform:scaleX(1.0300);-webkit-text-stroke:0.35px currentColor;">10</div>
<div class="t" style="left:36.80px;top:384.93px;line-height:12px;font:normal normal 11px 'Liberation Sans';color:#0866BF;transform:scaleX(0.9300);-webkit-text-stroke:0.35px currentColor;">Loafer — Caramel</div>
<div class="t" style="left:178.90px;top:384.93px;line-height:12px;font:normal normal 11px 'Liberation Sans';color:#0866BF;transform:scaleX(0.9300);-webkit-text-stroke:0.35px currentColor;">Loafers</div>
<div class="t" style="left:256.20px;top:384.93px;line-height:12px;font:normal normal 11px 'Liberation Sans';color:#0866BF;transform:scaleX(0.9300);-webkit-text-stroke:0.35px currentColor;">Core</div>
<div class="t" style="left:353.92px;top:384.93px;line-height:12px;font:normal normal 11px 'Liberation Sans';color:#0866BF;transform:scaleX(1.0300);-webkit-text-stroke:0.35px currentColor;">30</div>
<div class="t" style="left:399.72px;top:384.93px;line-height:12px;font:normal normal 11px 'Liberation Sans';color:#0866BF;transform:scaleX(1.0300);-webkit-text-stroke:0.35px currentColor;">150</div>
<div class="t" style="left:457.12px;top:384.93px;line-height:12px;font:normal normal 11px 'Liberation Sans';color:#0866BF;transform:scaleX(1.0300);-webkit-text-stroke:0.35px currentColor;">40</div>
<div class="t" style="left:515.52px;top:384.93px;line-height:12px;font:normal normal 11px 'Liberation Sans';color:#0866BF;transform:scaleX(1.0300);-webkit-text-stroke:0.35px currentColor;">140</div>
<div class="t" style="left:573.05px;top:384.93px;line-height:12px;font:normal normal 11px 'Liberation Sans';color:#0866BF;transform:scaleX(1.0300);-webkit-text-stroke:0.35px currentColor;">0,0%</div>
<div class="t" style="left:637.55px;top:384.93px;line-height:12px;font:normal normal 11px 'Liberation Sans';color:#0866BF;transform:scaleX(1.0300);-webkit-text-stroke:0.35px currentColor;">0,0%</div>
<div class="t" style="left:712.47px;top:384.93px;line-height:12px;font:normal normal 11px 'Liberation Sans';color:#0866BF;transform:scaleX(1.0300);-webkit-text-stroke:0.35px currentColor;">0,0</div>
<div class="t" style="left:760.72px;top:384.93px;line-height:12px;font:normal normal 11px 'Liberation Sans';color:#0866BF;transform:scaleX(1.0300);-webkit-text-stroke:0.35px currentColor;">105</div>
<div class="t" style="left:813.56px;top:384.93px;line-height:12px;font:normal normal 11px 'Liberation Sans';color:#0866BF;transform:scaleX(1.0300);-webkit-text-stroke:0.35px currentColor;">110</div>
<div class="t" style="left:864.32px;top:384.93px;line-height:12px;font:normal normal 11px 'Liberation Sans';color:#0866BF;transform:scaleX(1.0300);-webkit-text-stroke:0.35px currentColor;">125</div>
<div class="t" style="left:915.62px;top:384.93px;line-height:12px;font:normal normal 11px 'Liberation Sans';color:#0866BF;transform:scaleX(1.0300);-webkit-text-stroke:0.35px currentColor;">135</div>
<div class="t" style="left:967.72px;top:384.93px;line-height:12px;font:normal normal 11px 'Liberation Sans';color:#0866BF;transform:scaleX(1.0300);-webkit-text-stroke:0.35px currentColor;">142</div>
<div class="t" style="left:1019.02px;top:384.93px;line-height:12px;font:normal normal 11px 'Liberation Sans';color:#0866BF;transform:scaleX(1.0300);-webkit-text-stroke:0.35px currentColor;">138</div>
<div class="t" style="left:1071.02px;top:384.93px;line-height:12px;font:normal normal 11px 'Liberation Sans';color:#0866BF;transform:scaleX(1.0300);-webkit-text-stroke:0.35px currentColor;">135</div>
<div class="t" style="left:1122.62px;top:384.93px;line-height:12px;font:normal normal 11px 'Liberation Sans';color:#0866BF;transform:scaleX(1.0300);-webkit-text-stroke:0.35px currentColor;">140</div>
<div class="t" style="left:1174.22px;top:384.93px;line-height:12px;font:normal normal 11px 'Liberation Sans';color:#0866BF;transform:scaleX(1.0300);-webkit-text-stroke:0.35px currentColor;">132</div>
<div class="t" style="left:1225.82px;top:384.93px;line-height:12px;font:normal normal 11px 'Liberation Sans';color:#0866BF;transform:scaleX(1.0300);-webkit-text-stroke:0.35px currentColor;">125</div>
<div class="t" style="left:1278.16px;top:384.93px;line-height:12px;font:normal normal 11px 'Liberation Sans';color:#0866BF;transform:scaleX(1.0300);-webkit-text-stroke:0.35px currentColor;">118</div>
<div class="t" style="left:1328.92px;top:384.93px;line-height:12px;font:normal normal 11px 'Liberation Sans';color:#0866BF;transform:scaleX(1.0300);-webkit-text-stroke:0.35px currentColor;">108</div>
<div class="t" style="left:1383.67px;top:384.93px;line-height:12px;font:normal normal 11px 'Liberation Sans';color:#111;transform:scaleX(1.0300);-webkit-text-stroke:0.35px currentColor;">126,1</div>
<div class="t" style="left:2.30px;top:404.30px;line-height:12px;font:normal normal 11px 'Liberation Sans';color:#0866BF;transform:scaleX(1.0300);-webkit-text-stroke:0.35px currentColor;">11</div>
<div class="t" style="left:36.80px;top:404.30px;line-height:12px;font:normal normal 11px 'Liberation Sans';color:#0866BF;transform:scaleX(0.9300);-webkit-text-stroke:0.35px currentColor;">Loafer — Black Patent</div>
<div class="t" style="left:178.90px;top:404.30px;line-height:12px;font:normal normal 11px 'Liberation Sans';color:#0866BF;transform:scaleX(0.9300);-webkit-text-stroke:0.35px currentColor;">Loafers</div>
<div class="t" style="left:256.20px;top:404.30px;line-height:12px;font:normal normal 11px 'Liberation Sans';color:#0866BF;transform:scaleX(0.9300);-webkit-text-stroke:0.35px currentColor;">Core</div>
<div class="t" style="left:353.92px;top:404.30px;line-height:12px;font:normal normal 11px 'Liberation Sans';color:#0866BF;transform:scaleX(1.0300);-webkit-text-stroke:0.35px currentColor;">30</div>
<div class="t" style="left:399.72px;top:404.30px;line-height:12px;font:normal normal 11px 'Liberation Sans';color:#0866BF;transform:scaleX(1.0300);-webkit-text-stroke:0.35px currentColor;">150</div>
<div class="t" style="left:457.12px;top:404.30px;line-height:12px;font:normal normal 11px 'Liberation Sans';color:#0866BF;transform:scaleX(1.0300);-webkit-text-stroke:0.35px currentColor;">40</div>
<div class="t" style="left:521.82px;top:404.30px;line-height:12px;font:normal normal 11px 'Liberation Sans';color:#0866BF;transform:scaleX(1.0300);-webkit-text-stroke:0.35px currentColor;">62</div>
<div class="t" style="left:573.05px;top:404.30px;line-height:12px;font:normal normal 11px 'Liberation Sans';color:#0866BF;transform:scaleX(1.0300);-webkit-text-stroke:0.35px currentColor;">0,0%</div>
<div class="t" style="left:637.55px;top:404.30px;line-height:12px;font:normal normal 11px 'Liberation Sans';color:#0866BF;transform:scaleX(1.0300);-webkit-text-stroke:0.35px currentColor;">0,0%</div>
<div class="t" style="left:712.47px;top:404.30px;line-height:12px;font:normal normal 11px 'Liberation Sans';color:#0866BF;transform:scaleX(1.0300);-webkit-text-stroke:0.35px currentColor;">0,0</div>
<div class="t" style="left:767.02px;top:404.30px;line-height:12px;font:normal normal 11px 'Liberation Sans';color:#0866BF;transform:scaleX(1.0300);-webkit-text-stroke:0.35px currentColor;">98</div>
<div class="t" style="left:812.72px;top:404.30px;line-height:12px;font:normal normal 11px 'Liberation Sans';color:#0866BF;transform:scaleX(1.0300);-webkit-text-stroke:0.35px currentColor;">102</div>
<div class="t" style="left:865.16px;top:404.30px;line-height:12px;font:normal normal 11px 'Liberation Sans';color:#0866BF;transform:scaleX(1.0300);-webkit-text-stroke:0.35px currentColor;">118</div>
<div class="t" style="left:915.62px;top:404.30px;line-height:12px;font:normal normal 11px 'Liberation Sans';color:#0866BF;transform:scaleX(1.0300);-webkit-text-stroke:0.35px currentColor;">128</div>
<div class="t" style="left:967.72px;top:404.30px;line-height:12px;font:normal normal 11px 'Liberation Sans';color:#0866BF;transform:scaleX(1.0300);-webkit-text-stroke:0.35px currentColor;">135</div>
<div class="t" style="left:1019.02px;top:404.30px;line-height:12px;font:normal normal 11px 'Liberation Sans';color:#0866BF;transform:scaleX(1.0300);-webkit-text-stroke:0.35px currentColor;">130</div>
<div class="t" style="left:1071.02px;top:404.30px;line-height:12px;font:normal normal 11px 'Liberation Sans';color:#0866BF;transform:scaleX(1.0300);-webkit-text-stroke:0.35px currentColor;">128</div>
<div class="t" style="left:1122.62px;top:404.30px;line-height:12px;font:normal normal 11px 'Liberation Sans';color:#0866BF;transform:scaleX(1.0300);-webkit-text-stroke:0.35px currentColor;">132</div>
<div class="t" style="left:1174.22px;top:404.30px;line-height:12px;font:normal normal 11px 'Liberation Sans';color:#0866BF;transform:scaleX(1.0300);-webkit-text-stroke:0.35px currentColor;">125</div>
<div class="t" style="left:1226.66px;top:404.30px;line-height:12px;font:normal normal 11px 'Liberation Sans';color:#0866BF;transform:scaleX(1.0300);-webkit-text-stroke:0.35px currentColor;">118</div>
<div class="t" style="left:1278.16px;top:404.30px;line-height:12px;font:normal normal 11px 'Liberation Sans';color:#0866BF;transform:scaleX(1.0300);-webkit-text-stroke:0.35px currentColor;">112</div>
<div class="t" style="left:1328.92px;top:404.30px;line-height:12px;font:normal normal 11px 'Liberation Sans';color:#0866BF;transform:scaleX(1.0300);-webkit-text-stroke:0.35px currentColor;">102</div>
<div class="t" style="left:1384.51px;top:404.30px;line-height:12px;font:normal normal 11px 'Liberation Sans';color:#111;transform:scaleX(1.0300);-webkit-text-stroke:0.35px currentColor;">119,0</div>
<div class="t" style="left:2.30px;top:423.67px;line-height:12px;font:normal normal 11px 'Liberation Sans';color:#0866BF;transform:scaleX(1.0300);-webkit-text-stroke:0.35px currentColor;">12</div>
<div class="t" style="left:36.80px;top:423.67px;line-height:12px;font:normal normal 11px 'Liberation Sans';color:#0866BF;transform:scaleX(0.9300);-webkit-text-stroke:0.35px currentColor;">Boot — Waterproof Hiker</div>
<div class="t" style="left:178.90px;top:423.67px;line-height:12px;font:normal normal 11px 'Liberation Sans';color:#0866BF;transform:scaleX(0.9300);-webkit-text-stroke:0.35px currentColor;">Boots</div>
<div class="t" style="left:256.20px;top:423.67px;line-height:12px;font:normal normal 11px 'Liberation Sans';color:#0866BF;transform:scaleX(0.9300);-webkit-text-stroke:0.35px currentColor;">Seasonal</div>
<div class="t" style="left:353.92px;top:423.67px;line-height:12px;font:normal normal 11px 'Liberation Sans';color:#0866BF;transform:scaleX(1.0300);-webkit-text-stroke:0.35px currentColor;">35</div>
<div class="t" style="left:399.72px;top:423.67px;line-height:12px;font:normal normal 11px 'Liberation Sans';color:#0866BF;transform:scaleX(1.0300);-webkit-text-stroke:0.35px currentColor;">120</div>
<div class="t" style="left:457.12px;top:423.67px;line-height:12px;font:normal normal 11px 'Liberation Sans';color:#0866BF;transform:scaleX(1.0300);-webkit-text-stroke:0.35px currentColor;">35</div>
<div class="t" style="left:515.52px;top:423.67px;line-height:12px;font:normal normal 11px 'Liberation Sans';color:#0866BF;transform:scaleX(1.0300);-webkit-text-stroke:0.35px currentColor;">190</div>
<div class="t" style="left:573.05px;top:423.67px;line-height:12px;font:normal normal 11px 'Liberation Sans';color:#0866BF;transform:scaleX(1.0300);-webkit-text-stroke:0.35px currentColor;">0,0%</div>
<div class="t" style="left:637.55px;top:423.67px;line-height:12px;font:normal normal 11px 'Liberation Sans';color:#0866BF;transform:scaleX(1.0300);-webkit-text-stroke:0.35px currentColor;">0,0%</div>
<div class="t" style="left:712.47px;top:423.67px;line-height:12px;font:normal normal 11px 'Liberation Sans';color:#0866BF;transform:scaleX(1.0300);-webkit-text-stroke:0.35px currentColor;">0,0</div>
<div class="t" style="left:760.72px;top:423.67px;line-height:12px;font:normal normal 11px 'Liberation Sans';color:#0866BF;transform:scaleX(1.0300);-webkit-text-stroke:0.35px currentColor;">145</div>
<div class="t" style="left:812.72px;top:423.67px;line-height:12px;font:normal normal 11px 'Liberation Sans';color:#0866BF;transform:scaleX(1.0300);-webkit-text-stroke:0.35px currentColor;">125</div>
<div class="t" style="left:864.32px;top:423.67px;line-height:12px;font:normal normal 11px 'Liberation Sans';color:#0866BF;transform:scaleX(1.0300);-webkit-text-stroke:0.35px currentColor;">108</div>
<div class="t" style="left:921.92px;top:423.67px;line-height:12px;font:normal normal 11px 'Liberation Sans';color:#0866BF;transform:scaleX(1.0300);-webkit-text-stroke:0.35px currentColor;">80</div>
<div class="t" style="left:974.02px;top:423.67px;line-height:12px;font:normal normal 11px 'Liberation Sans';color:#0866BF;transform:scaleX(1.0300);-webkit-text-stroke:0.35px currentColor;">65</div>
<div class="t" style="left:1025.32px;top:423.67px;line-height:12px;font:normal normal 11px 'Liberation Sans';color:#0866BF;transform:scaleX(1.0300);-webkit-text-stroke:0.35px currentColor;">58</div>
<div class="t" style="left:1077.32px;top:423.67px;line-height:12px;font:normal normal 11px 'Liberation Sans';color:#0866BF;transform:scaleX(1.0300);-webkit-text-stroke:0.35px currentColor;">60</div>
<div class="t" style="left:1128.92px;top:423.67px;line-height:12px;font:normal normal 11px 'Liberation Sans';color:#0866BF;transform:scaleX(1.0300);-webkit-text-stroke:0.35px currentColor;">70</div>
<div class="t" style="left:1180.52px;top:423.67px;line-height:12px;font:normal normal 11px 'Liberation Sans';color:#0866BF;transform:scaleX(1.0300);-webkit-text-stroke:0.35px currentColor;">95</div>
<div class="t" style="left:1225.82px;top:423.67px;line-height:12px;font:normal normal 11px 'Liberation Sans';color:#0866BF;transform:scaleX(1.0300);-webkit-text-stroke:0.35px currentColor;">155</div>
<div class="t" style="left:1277.32px;top:423.67px;line-height:12px;font:normal normal 11px 'Liberation Sans';color:#0866BF;transform:scaleX(1.0300);-webkit-text-stroke:0.35px currentColor;">218</div>
<div class="t" style="left:1328.92px;top:423.67px;line-height:12px;font:normal normal 11px 'Liberation Sans';color:#0866BF;transform:scaleX(1.0300);-webkit-text-stroke:0.35px currentColor;">245</div>
<div class="t" style="left:1384.51px;top:423.67px;line-height:12px;font:normal normal 11px 'Liberation Sans';color:#111;transform:scaleX(1.0300);-webkit-text-stroke:0.35px currentColor;">118,7</div>
<div class="t" style="left:2.30px;top:443.04px;line-height:12px;font:normal normal 11px 'Liberation Sans';color:#0866BF;transform:scaleX(1.0300);-webkit-text-stroke:0.35px currentColor;">13</div>
<div class="t" style="left:36.80px;top:443.04px;line-height:12px;font:normal normal 11px 'Liberation Sans';color:#0866BF;transform:scaleX(0.9300);-webkit-text-stroke:0.35px currentColor;">Sneaker — Kids Canvas</div>
<div class="t" style="left:178.90px;top:443.04px;line-height:12px;font:normal normal 11px 'Liberation Sans';color:#0866BF;transform:scaleX(0.9300);-webkit-text-stroke:0.35px currentColor;">Kids</div>
<div class="t" style="left:256.20px;top:443.04px;line-height:12px;font:normal normal 11px 'Liberation Sans';color:#0866BF;transform:scaleX(0.9300);-webkit-text-stroke:0.35px currentColor;">Core</div>
<div class="t" style="left:353.92px;top:443.04px;line-height:12px;font:normal normal 11px 'Liberation Sans';color:#0866BF;transform:scaleX(1.0300);-webkit-text-stroke:0.35px currentColor;">21</div>
<div class="t" style="left:399.72px;top:443.04px;line-height:12px;font:normal normal 11px 'Liberation Sans';color:#0866BF;transform:scaleX(1.0300);-webkit-text-stroke:0.35px currentColor;">500</div>
<div class="t" style="left:450.82px;top:443.04px;line-height:12px;font:normal normal 11px 'Liberation Sans';color:#0866BF;transform:scaleX(1.0300);-webkit-text-stroke:0.35px currentColor;">120</div>
<div class="t" style="left:515.52px;top:443.04px;line-height:12px;font:normal normal 11px 'Liberation Sans';color:#0866BF;transform:scaleX(1.0300);-webkit-text-stroke:0.35px currentColor;">380</div>
<div class="t" style="left:573.05px;top:443.04px;line-height:12px;font:normal normal 11px 'Liberation Sans';color:#0866BF;transform:scaleX(1.0300);-webkit-text-stroke:0.35px currentColor;">5,0%</div>
<div class="t" style="left:637.55px;top:443.04px;line-height:12px;font:normal normal 11px 'Liberation Sans';color:#0866BF;transform:scaleX(1.0300);-webkit-text-stroke:0.35px currentColor;">0,0%</div>
<div class="t" style="left:712.47px;top:443.04px;line-height:12px;font:normal normal 11px 'Liberation Sans';color:#0866BF;transform:scaleX(1.0300);-webkit-text-stroke:0.35px currentColor;">0,0</div>
<div class="t" style="left:760.72px;top:443.04px;line-height:12px;font:normal normal 11px 'Liberation Sans';color:#0866BF;transform:scaleX(1.0300);-webkit-text-stroke:0.35px currentColor;">420</div>
<div class="t" style="left:812.72px;top:443.04px;line-height:12px;font:normal normal 11px 'Liberation Sans';color:#0866BF;transform:scaleX(1.0300);-webkit-text-stroke:0.35px currentColor;">438</div>
<div class="t" style="left:864.32px;top:443.04px;line-height:12px;font:normal normal 11px 'Liberation Sans';color:#0866BF;transform:scaleX(1.0300);-webkit-text-stroke:0.35px currentColor;">465</div>
<div class="t" style="left:915.62px;top:443.04px;line-height:12px;font:normal normal 11px 'Liberation Sans';color:#0866BF;transform:scaleX(1.0300);-webkit-text-stroke:0.35px currentColor;">488</div>
<div class="t" style="left:967.72px;top:443.04px;line-height:12px;font:normal normal 11px 'Liberation Sans';color:#0866BF;transform:scaleX(1.0300);-webkit-text-stroke:0.35px currentColor;">510</div>
<div class="t" style="left:1019.02px;top:443.04px;line-height:12px;font:normal normal 11px 'Liberation Sans';color:#0866BF;transform:scaleX(1.0300);-webkit-text-stroke:0.35px currentColor;">525</div>
<div class="t" style="left:1071.02px;top:443.04px;line-height:12px;font:normal normal 11px 'Liberation Sans';color:#0866BF;transform:scaleX(1.0300);-webkit-text-stroke:0.35px currentColor;">535</div>
<div class="t" style="left:1122.62px;top:443.04px;line-height:12px;font:normal normal 11px 'Liberation Sans';color:#0866BF;transform:scaleX(1.0300);-webkit-text-stroke:0.35px currentColor;">540</div>
<div class="t" style="left:1174.22px;top:443.04px;line-height:12px;font:normal normal 11px 'Liberation Sans';color:#0866BF;transform:scaleX(1.0300);-webkit-text-stroke:0.35px currentColor;">492</div>
<div class="t" style="left:1225.82px;top:443.04px;line-height:12px;font:normal normal 11px 'Liberation Sans';color:#0866BF;transform:scaleX(1.0300);-webkit-text-stroke:0.35px currentColor;">440</div>
<div class="t" style="left:1277.32px;top:443.04px;line-height:12px;font:normal normal 11px 'Liberation Sans';color:#0866BF;transform:scaleX(1.0300);-webkit-text-stroke:0.35px currentColor;">385</div>
<div class="t" style="left:1328.92px;top:443.04px;line-height:12px;font:normal normal 11px 'Liberation Sans';color:#0866BF;transform:scaleX(1.0300);-webkit-text-stroke:0.35px currentColor;">365</div>
<div class="t" style="left:1383.67px;top:443.04px;line-height:12px;font:normal normal 11px 'Liberation Sans';color:#111;transform:scaleX(1.0300);-webkit-text-stroke:0.35px currentColor;">466,9</div>
<div class="t" style="left:2.30px;top:462.41px;line-height:12px;font:normal normal 11px 'Liberation Sans';color:#0866BF;transform:scaleX(1.0300);-webkit-text-stroke:0.35px currentColor;">14</div>
<div class="t" style="left:36.80px;top:462.41px;line-height:12px;font:normal normal 11px 'Liberation Sans';color:#0866BF;transform:scaleX(0.9300);-webkit-text-stroke:0.35px currentColor;">Sandal — Kids Velcro</div>
<div class="t" style="left:178.90px;top:462.41px;line-height:12px;font:normal normal 11px 'Liberation Sans';color:#0866BF;transform:scaleX(0.9300);-webkit-text-stroke:0.35px currentColor;">Kids</div>
<div class="t" style="left:256.20px;top:462.41px;line-height:12px;font:normal normal 11px 'Liberation Sans';color:#0866BF;transform:scaleX(0.9300);-webkit-text-stroke:0.35px currentColor;">Seasonal</div>
<div class="t" style="left:353.92px;top:462.41px;line-height:12px;font:normal normal 11px 'Liberation Sans';color:#0866BF;transform:scaleX(1.0300);-webkit-text-stroke:0.35px currentColor;">21</div>
<div class="t" style="left:399.72px;top:462.41px;line-height:12px;font:normal normal 11px 'Liberation Sans';color:#0866BF;transform:scaleX(1.0300);-webkit-text-stroke:0.35px currentColor;">400</div>
<div class="t" style="left:450.82px;top:462.41px;line-height:12px;font:normal normal 11px 'Liberation Sans';color:#0866BF;transform:scaleX(1.0300);-webkit-text-stroke:0.35px currentColor;">100</div>
<div class="t" style="left:515.52px;top:462.41px;line-height:12px;font:normal normal 11px 'Liberation Sans';color:#0866BF;transform:scaleX(1.0300);-webkit-text-stroke:0.35px currentColor;">280</div>
<div class="t" style="left:573.05px;top:462.41px;line-height:12px;font:normal normal 11px 'Liberation Sans';color:#0866BF;transform:scaleX(1.0300);-webkit-text-stroke:0.35px currentColor;">0,0%</div>
<div class="t" style="left:637.55px;top:462.41px;line-height:12px;font:normal normal 11px 'Liberation Sans';color:#0866BF;transform:scaleX(1.0300);-webkit-text-stroke:0.35px currentColor;">0,0%</div>
<div class="t" style="left:712.47px;top:462.41px;line-height:12px;font:normal normal 11px 'Liberation Sans';color:#0866BF;transform:scaleX(1.0300);-webkit-text-stroke:0.35px currentColor;">0,0</div>
<div class="t" style="left:760.72px;top:462.41px;line-height:12px;font:normal normal 11px 'Liberation Sans';color:#0866BF;transform:scaleX(1.0300);-webkit-text-stroke:0.35px currentColor;">165</div>
<div class="t" style="left:812.72px;top:462.41px;line-height:12px;font:normal normal 11px 'Liberation Sans';color:#0866BF;transform:scaleX(1.0300);-webkit-text-stroke:0.35px currentColor;">210</div>
<div class="t" style="left:864.32px;top:462.41px;line-height:12px;font:normal normal 11px 'Liberation Sans';color:#0866BF;transform:scaleX(1.0300);-webkit-text-stroke:0.35px currentColor;">340</div>
<div class="t" style="left:915.62px;top:462.41px;line-height:12px;font:normal normal 11px 'Liberation Sans';color:#0866BF;transform:scaleX(1.0300);-webkit-text-stroke:0.35px currentColor;">480</div>
<div class="t" style="left:967.72px;top:462.41px;line-height:12px;font:normal normal 11px 'Liberation Sans';color:#0866BF;transform:scaleX(1.0300);-webkit-text-stroke:0.35px currentColor;">590</div>
<div class="t" style="left:1019.02px;top:462.41px;line-height:12px;font:normal normal 11px 'Liberation Sans';color:#0866BF;transform:scaleX(1.0300);-webkit-text-stroke:0.35px currentColor;">640</div>
<div class="t" style="left:1071.02px;top:462.41px;line-height:12px;font:normal normal 11px 'Liberation Sans';color:#0866BF;transform:scaleX(1.0300);-webkit-text-stroke:0.35px currentColor;">625</div>
<div class="t" style="left:1122.62px;top:462.41px;line-height:12px;font:normal normal 11px 'Liberation Sans';color:#0866BF;transform:scaleX(1.0300);-webkit-text-stroke:0.35px currentColor;">545</div>
<div class="t" style="left:1174.22px;top:462.41px;line-height:12px;font:normal normal 11px 'Liberation Sans';color:#0866BF;transform:scaleX(1.0300);-webkit-text-stroke:0.35px currentColor;">395</div>
<div class="t" style="left:1225.82px;top:462.41px;line-height:12px;font:normal normal 11px 'Liberation Sans';color:#0866BF;transform:scaleX(1.0300);-webkit-text-stroke:0.35px currentColor;">225</div>
<div class="t" style="left:1277.32px;top:462.41px;line-height:12px;font:normal normal 11px 'Liberation Sans';color:#0866BF;transform:scaleX(1.0300);-webkit-text-stroke:0.35px currentColor;">130</div>
<div class="t" style="left:1335.22px;top:462.41px;line-height:12px;font:normal normal 11px 'Liberation Sans';color:#0866BF;transform:scaleX(1.0300);-webkit-text-stroke:0.35px currentColor;">98</div>
<div class="t" style="left:1383.67px;top:462.41px;line-height:12px;font:normal normal 11px 'Liberation Sans';color:#111;transform:scaleX(1.0300);-webkit-text-stroke:0.35px currentColor;">370,3</div>
<div class="t" style="left:2.30px;top:481.78px;line-height:12px;font:normal normal 11px 'Liberation Sans';color:#0866BF;transform:scaleX(1.0300);-webkit-text-stroke:0.35px currentColor;">15</div>
<div class="t" style="left:36.80px;top:481.78px;line-height:12px;font:normal normal 11px 'Liberation Sans';color:#0866BF;transform:scaleX(0.9300);-webkit-text-stroke:0.35px currentColor;">Boot — Moto Zip</div>
<div class="t" style="left:178.90px;top:481.78px;line-height:12px;font:normal normal 11px 'Liberation Sans';color:#0866BF;transform:scaleX(0.9300);-webkit-text-stroke:0.35px currentColor;">Boots</div>
<div class="t" style="left:256.20px;top:481.78px;line-height:12px;font:normal normal 11px 'Liberation Sans';color:#0866BF;transform:scaleX(0.9300);-webkit-text-stroke:0.35px currentColor;">Seasonal</div>
<div class="t" style="left:353.92px;top:481.78px;line-height:12px;font:normal normal 11px 'Liberation Sans';color:#0866BF;transform:scaleX(1.0300);-webkit-text-stroke:0.35px currentColor;">14</div>
<div class="t" style="left:399.72px;top:481.78px;line-height:12px;font:normal normal 11px 'Liberation Sans';color:#0866BF;transform:scaleX(1.0300);-webkit-text-stroke:0.35px currentColor;">160</div>
<div class="t" style="left:457.12px;top:481.78px;line-height:12px;font:normal normal 11px 'Liberation Sans';color:#0866BF;transform:scaleX(1.0300);-webkit-text-stroke:0.35px currentColor;">45</div>
<div class="t" style="left:515.52px;top:481.78px;line-height:12px;font:normal normal 11px 'Liberation Sans';color:#0866BF;transform:scaleX(1.0300);-webkit-text-stroke:0.35px currentColor;">185</div>
<div class="t" style="left:573.05px;top:481.78px;line-height:12px;font:normal normal 11px 'Liberation Sans';color:#0866BF;transform:scaleX(1.0300);-webkit-text-stroke:0.35px currentColor;">5,0%</div>
<div class="t" style="left:637.55px;top:481.78px;line-height:12px;font:normal normal 11px 'Liberation Sans';color:#0866BF;transform:scaleX(1.0300);-webkit-text-stroke:0.35px currentColor;">0,0%</div>
<div class="t" style="left:712.47px;top:481.78px;line-height:12px;font:normal normal 11px 'Liberation Sans';color:#0866BF;transform:scaleX(1.0300);-webkit-text-stroke:0.35px currentColor;">0,0</div>
<div class="t" style="left:760.72px;top:481.78px;line-height:12px;font:normal normal 11px 'Liberation Sans';color:#0866BF;transform:scaleX(1.0300);-webkit-text-stroke:0.35px currentColor;">165</div>
<div class="t" style="left:812.72px;top:481.78px;line-height:12px;font:normal normal 11px 'Liberation Sans';color:#0866BF;transform:scaleX(1.0300);-webkit-text-stroke:0.35px currentColor;">142</div>
<div class="t" style="left:864.32px;top:481.78px;line-height:12px;font:normal normal 11px 'Liberation Sans';color:#0866BF;transform:scaleX(1.0300);-webkit-text-stroke:0.35px currentColor;">135</div>
<div class="t" style="left:921.92px;top:481.78px;line-height:12px;font:normal normal 11px 'Liberation Sans';color:#0866BF;transform:scaleX(1.0300);-webkit-text-stroke:0.35px currentColor;">98</div>
<div class="t" style="left:974.02px;top:481.78px;line-height:12px;font:normal normal 11px 'Liberation Sans';color:#0866BF;transform:scaleX(1.0300);-webkit-text-stroke:0.35px currentColor;">88</div>
<div class="t" style="left:1025.32px;top:481.78px;line-height:12px;font:normal normal 11px 'Liberation Sans';color:#0866BF;transform:scaleX(1.0300);-webkit-text-stroke:0.35px currentColor;">82</div>
<div class="t" style="left:1077.32px;top:481.78px;line-height:12px;font:normal normal 11px 'Liberation Sans';color:#0866BF;transform:scaleX(1.0300);-webkit-text-stroke:0.35px currentColor;">85</div>
<div class="t" style="left:1128.92px;top:481.78px;line-height:12px;font:normal normal 11px 'Liberation Sans';color:#0866BF;transform:scaleX(1.0300);-webkit-text-stroke:0.35px currentColor;">92</div>
<div class="t" style="left:1175.06px;top:481.78px;line-height:12px;font:normal normal 11px 'Liberation Sans';color:#0866BF;transform:scaleX(1.0300);-webkit-text-stroke:0.35px currentColor;">118</div>
<div class="t" style="left:1225.82px;top:481.78px;line-height:12px;font:normal normal 11px 'Liberation Sans';color:#0866BF;transform:scaleX(1.0300);-webkit-text-stroke:0.35px currentColor;">175</div>
<div class="t" style="left:1277.32px;top:481.78px;line-height:12px;font:normal normal 11px 'Liberation Sans';color:#0866BF;transform:scaleX(1.0300);-webkit-text-stroke:0.35px currentColor;">240</div>
<div class="t" style="left:1328.92px;top:481.78px;line-height:12px;font:normal normal 11px 'Liberation Sans';color:#0866BF;transform:scaleX(1.0300);-webkit-text-stroke:0.35px currentColor;">268</div>
<div class="t" style="left:1383.67px;top:481.78px;line-height:12px;font:normal normal 11px 'Liberation Sans';color:#111;transform:scaleX(1.0300);-webkit-text-stroke:0.35px currentColor;">140,7</div>
<div class="t" style="left:63.00px;top:733.70px;line-height:14px;font:normal bold 12.6px 'Liberation Sans';color:#1E7B45;transform:scaleX(1.0215);">DemandForecast</div>
<div class="t" style="left:205.93px;top:733.70px;line-height:14px;font:normal normal 12.6px 'Liberation Sans';color:#505050;transform:scaleX(1.0725);-webkit-text-stroke:0.2px currentColor;">Dashboard</div>
<div class="t" style="left:308.92px;top:733.70px;line-height:14px;font:normal normal 12.6px 'Liberation Sans';color:#505050;transform:scaleX(1.0767);-webkit-text-stroke:0.2px currentColor;">How to Use</div>
<div style="position:absolute;left:0.00px;top:94.10px;width:1.00px;height:631.90px;background:#FFFFFF;"></div>
<div style="position:absolute;left:1.00px;top:94.10px;width:1.00px;height:631.90px;background:#D0D0D0;"></div>
<div style="position:absolute;left:0.00px;top:57.70px;width:1.00px;height:36.40px;background:#FFFFFF;"></div>
<div style="position:absolute;left:0.00px;top:57.70px;width:1.70px;height:23.30px;background:#1D6F42;"></div>
<div style="position:absolute;left:1.00px;top:81.00px;width:1.00px;height:13.10px;background:#D0D0D0;"></div>
</body></html>
